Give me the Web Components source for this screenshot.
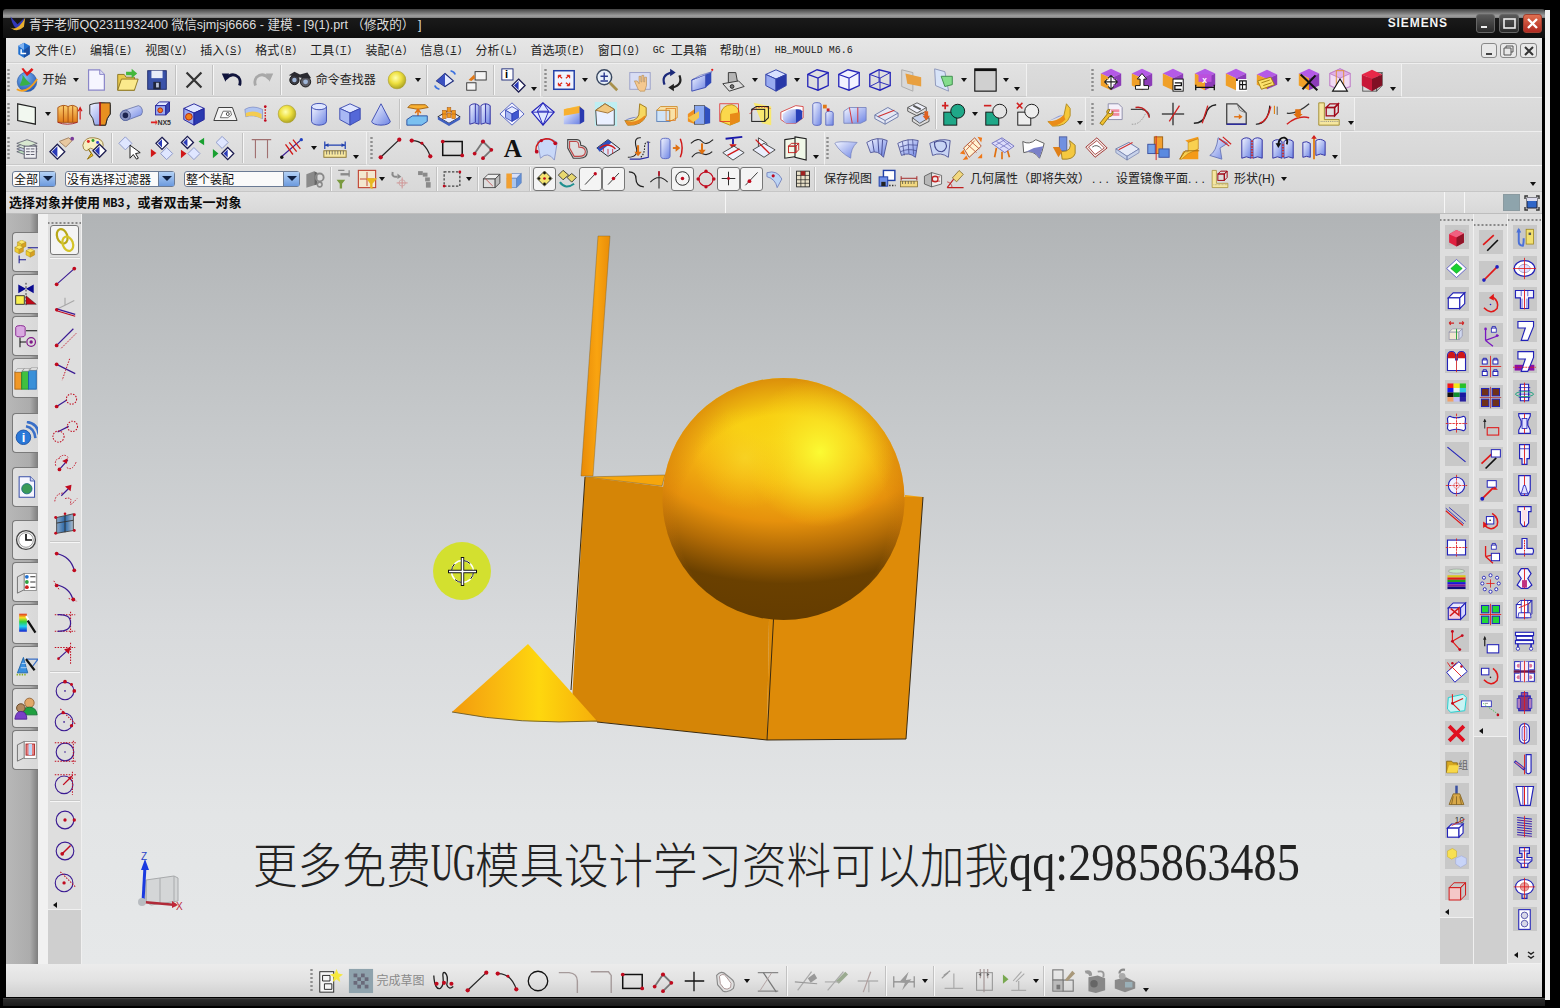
<!DOCTYPE html>
<html lang="zh">
<head>
<meta charset="utf-8">
<title>NX</title>
<style>
  html, body { margin: 0; background: #000; }
  body { width: 1560px; height: 1008px; overflow: hidden; font: 12px "Liberation Sans", "Noto Sans CJK SC", sans-serif; }
</style>
</head>
<body>
<nx-app>
  <nx-title text="青宇老师QQ2311932400 微信sjmjsj6666 - 建模 - [9(1).prt （修改的） ]"></nx-title>
  <nx-client>
    <nx-menubar>
      <nx-i n="ug" w="22" s="20"></nx-i>
      <nx-menu label="文件" k="F"></nx-menu><nx-menu label="编辑" k="E"></nx-menu><nx-menu label="视图" k="V"></nx-menu><nx-menu label="插入" k="S"></nx-menu><nx-menu label="格式" k="R"></nx-menu><nx-menu label="工具" k="T"></nx-menu><nx-menu label="装配" k="A"></nx-menu><nx-menu label="信息" k="I"></nx-menu><nx-menu label="分析" k="L"></nx-menu><nx-menu label="首选项" k="P"></nx-menu><nx-menu label="窗口" k="O"></nx-menu><nx-menu label="GC 工具箱"></nx-menu><nx-menu label="帮助" k="H"></nx-menu><nx-menu mono label="HB_MOULD M6.6"></nx-menu>
    </nx-menubar>

    <nx-row>
      <nx-bar style="width:535px">
        <nx-i n="logo" w="31"></nx-i><nx-label w="28">开始</nx-label><nx-a w="10"></nx-a>
        <nx-i n="newdoc"></nx-i><nx-i n="open" w="30"></nx-i><nx-i n="save"></nx-i><nx-s></nx-s>
        <nx-i n="del"></nx-i><nx-s></nx-s><nx-i n="undo"></nx-i><nx-i n="redo"></nx-i><nx-s></nx-s>
        <nx-i n="bino"></nx-i><nx-label w="66">命令查找器</nx-label><nx-i n="sph"></nx-i><nx-a></nx-a><nx-s></nx-s>
        <nx-i n="rotd"></nx-i><nx-i n="twosq" w="30"></nx-i><nx-s></nx-s><nx-i n="infod"></nx-i><nx-a low></nx-a>
      </nx-bar>
      <nx-bar style="width:484px;margin-left:2px">
        <nx-i n="fit"></nx-i><nx-a></nx-a><nx-i n="zoom" w="33"></nx-i><nx-i n="pan" w="33"></nx-i><nx-i n="rot" w="30"></nx-i><nx-i n="persp"></nx-i><nx-i n="shade"></nx-i><nx-a></nx-a>
        <nx-i n="cubeb"></nx-i><nx-a></nx-a><nx-i n="w1"></nx-i><nx-i n="w2"></nx-i><nx-i n="w3"></nx-i><nx-i n="ploran"></nx-i><nx-i n="plgrn"></nx-i><nx-a></nx-a><nx-i n="graysq"></nx-i><nx-a></nx-a><nx-a low></nx-a>
      </nx-bar>
      <nx-bar style="width:312px;margin-left:63px">
        <nx-i n="pmove"></nx-i><nx-i n="pup"></nx-i><nx-i n="pcopy"></nx-i><nx-i n="pdim"></nx-i><nx-i n="pbox"></nx-i><nx-i n="pnote"></nx-i><nx-a></nx-a><nx-i n="px"></nx-i><nx-i n="ptri"></nx-i><nx-i n="redwire"></nx-i><nx-a low></nx-a>
      </nx-bar>
    </nx-row>

    <nx-row>
      <nx-bar style="width:1080px">
        <nx-i n="sheet" w="31"></nx-i><nx-a></nx-a><nx-i n="extr"></nx-i><nx-i n="rev"></nx-i><nx-i n="tube"></nx-i><nx-i n="nx5"></nx-i><nx-i n="hblk"></nx-i><nx-i n="emb"></nx-i><nx-i n="swp"></nx-i><nx-i n="sph"></nx-i><nx-i n="cyl"></nx-i><nx-i n="blk"></nx-i><nx-i n="cone"></nx-i><nx-s></nx-s>
        <nx-i n="ped" w="31"></nx-i><nx-i n="dots"></nx-i><nx-i n="book"></nx-i><nx-i n="dcube"></nx-i><nx-i n="wball"></nx-i><nx-i n="otop"></nx-i><nx-i n="cpic"></nx-i><nx-i n="ysheet"></nx-i><nx-i n="cube2"></nx-i><nx-i n="ocyl"></nx-i><nx-i n="rdome"></nx-i><nx-i n="ybox"></nx-i><nx-i n="rcut"></nx-i><nx-i n="cyl2"></nx-i><nx-i n="split"></nx-i><nx-i n="slab"></nx-i><nx-i n="slabs"></nx-i><nx-s></nx-s>
        <nx-i n="uadd"></nx-i><nx-a></nx-a><nx-i n="usub"></nx-i><nx-i n="uint"></nx-i><nx-i n="ysweep"></nx-i><nx-a low></nx-a>
      </nx-bar>
      <nx-bar style="width:265px;margin-left:4px">
        <nx-i n="wrench"></nx-i><nx-i n="cv1"></nx-i><nx-i n="cv2"></nx-i><nx-i n="cv3"></nx-i><nx-i n="cv4"></nx-i><nx-i n="cv5"></nx-i><nx-i n="cv6"></nx-i><nx-i n="ruler"></nx-i><nx-a low></nx-a>
      </nx-bar>
    </nx-row>

    <nx-row>
      <nx-bar style="width:361px">
        <nx-i n="layers" w="30"></nx-i><nx-s w="5"></nx-s><nx-i n="dhand"></nx-i><nx-i n="palette"></nx-i><nx-s></nx-s><nx-i n="dcur"></nx-i><nx-i n="d2a"></nx-i><nx-i n="d2b"></nx-i><nx-i n="d2c"></nx-i><nx-s></nx-s><nx-i n="hh"></nx-i><nx-i n="hatch"></nx-i><nx-a></nx-a><nx-i n="meas"></nx-i><nx-a low></nx-a>
      </nx-bar>
      <nx-bar style="width:456px;margin-left:2px">
        <nx-i n="sline" w="31"></nx-i><nx-i n="sarc"></nx-i><nx-i n="srect"></nx-i><nx-i n="sprof"></nx-i><nx-i n="atxt"></nx-i><nx-i n="spat"></nx-i><nx-i n="heart"></nx-i><nx-i n="wing"></nx-i><nx-i n="ucv"></nx-i><nx-i n="cylarr"></nx-i><nx-i n="scv"></nx-i><nx-i n="tplate"></nx-i><nx-i n="xplate"></nx-i><nx-i n="cards"></nx-i><nx-a low></nx-a>
      </nx-bar>
      <nx-bar style="width:516px">
        <nx-i n="s1"></nx-i><nx-i n="s2"></nx-i><nx-i n="s3"></nx-i><nx-i n="s4"></nx-i><nx-i n="s5"></nx-i><nx-i n="s6"></nx-i><nx-i n="s7"></nx-i><nx-i n="s8"></nx-i><nx-i n="s9"></nx-i><nx-i n="s10"></nx-i><nx-i n="s11"></nx-i><nx-i n="s12"></nx-i><nx-i n="s13"></nx-i><nx-i n="s14"></nx-i><nx-i n="s14b"></nx-i><nx-i n="s15"></nx-i><nx-a low></nx-a>
      </nx-bar>
    </nx-row>

    <nx-selbar>
      <nx-combo style="margin-left:6px;width:44px" label="全部"></nx-combo>
      <nx-combo style="margin-left:9px;width:110px" label="没有选择过滤器"></nx-combo>
      <nx-combo style="margin:0 3.5px 0 9px;width:116px" label="整个装配"></nx-combo>
      <nx-i n="gblk" w="23" s="22"></nx-i><nx-s w="9" h="24"></nx-s><nx-i n="gfun" w="20" s="22"></nx-i><nx-i n="rfil" w="22" s="22"></nx-i><nx-a w="8"></nx-a>
      <nx-i n="gcross" w="26" s="22"></nx-i><nx-i n="gdots" w="21" s="22"></nx-i><nx-s w="9" h="24"></nx-s><nx-i n="dashrect" w="20" s="22"></nx-i><nx-a w="14"></nx-a><nx-s w="5" h="24"></nx-s>
      <nx-i n="graybx" w="23" s="22"></nx-i><nx-i n="bluebx" w="23" s="22"></nx-i><nx-s w="7" h="24"></nx-s>
      <nx-i n="snapall" box w="22"></nx-i><nx-i n="snapg" w="23" s="22"></nx-i><nx-i n="snapend" box w="23"></nx-i><nx-i n="snapmid" box w="23"></nx-i><nx-i n="snapc" w="23" s="22"></nx-i><nx-i n="snapt" w="23" s="22"></nx-i><nx-i n="snapcirc" box w="24"></nx-i><nx-i n="snapq" w="22" s="22"></nx-i><nx-i n="snapx" box w="23"></nx-i><nx-i n="snapo" box w="23"></nx-i><nx-i n="snapw" w="22" s="22"></nx-i>
      <nx-s w="11" h="24"></nx-s><nx-i n="grid" w="15" s="20"></nx-i><nx-s w="9" h="24"></nx-s>
      <nx-label w="48" style="margin-left:4.5px">保存视图</nx-label>
      <nx-i n="view2" w="30" s="20"></nx-i><nx-i n="rlr" w="14" s="20"></nx-i><nx-i n="wall" w="34" s="20"></nx-i><nx-i n="tria" w="10" s="20"></nx-i>
      <nx-label w="137" style="margin-left:10px">几何属性（即将失效）<span style="letter-spacing:3.4px;margin-left:2px">...</span></nx-label>
      <nx-label w="87" style="margin-left:9px">设置镜像平面<span style="letter-spacing:3.4px">...</span></nx-label>
      <nx-i n="ruler" w="28" s="20" style="margin-left:3px"></nx-i>
      <nx-label w="42">形状(H)</nx-label><nx-a w="16"></nx-a>
      <nx-a low style="margin-left:auto;margin-right:4px"></nx-a>
    </nx-selbar>

    <nx-cue text="选择对象并使用"></nx-cue>

    <nx-main>
      <nx-res>
        <nx-tab n="tab1"></nx-tab><nx-tab n="tab2"></nx-tab><nx-tab n="tab3"></nx-tab><nx-tab n="tab4"></nx-tab>
        <nx-tab n="tab5" style="margin-top:13px"></nx-tab>
        <nx-tab n="tab6" style="margin-top:12px"></nx-tab>
        <nx-tab n="tab7" style="margin-top:11px"></nx-tab><nx-tab n="tab8"></nx-tab><nx-tab n="tab9"></nx-tab><nx-tab n="tab10"></nx-tab><nx-tab n="tab11"></nx-tab><nx-tab n="tab12"></nx-tab>
      </nx-res>
      <nx-stripe></nx-stripe>
      <nx-vbar style="--top:4px;--h:696px">
        <nx-i v box n="link" style="height:30px"></nx-i><nx-s v></nx-s>
        <nx-i v n="l1"></nx-i><nx-i v n="l2"></nx-i><nx-i v n="l3"></nx-i><nx-i v n="l4"></nx-i><nx-i v n="l5"></nx-i><nx-i v n="l6"></nx-i><nx-i v n="l7"></nx-i><nx-i v n="l8"></nx-i><nx-i v n="l9"></nx-i><nx-s v></nx-s>
        <nx-i v n="a1"></nx-i><nx-i v n="a2"></nx-i><nx-i v n="a3"></nx-i><nx-i v n="a4"></nx-i><nx-s v></nx-s>
        <nx-i v n="c1"></nx-i><nx-i v n="c2"></nx-i><nx-i v n="c3"></nx-i><nx-i v n="c4"></nx-i><nx-s v></nx-s>
        <nx-i v n="c5"></nx-i><nx-i v n="c6"></nx-i><nx-i v n="c7"></nx-i><nx-tri></nx-tri>
      </nx-vbar>
      <nx-viewport>
        <nx-watermark></nx-watermark>
      </nx-viewport>
      <nx-vbar style="--top:0.5px;--h:704px">
        <nx-i v tile n="r1"></nx-i><nx-i v tile n="r2"></nx-i><nx-i v tile n="r3"></nx-i><nx-i v tile n="r4"></nx-i><nx-i v tile n="r5"></nx-i><nx-i v tile n="r6"></nx-i><nx-i v tile n="r7"></nx-i><nx-i v tile n="r8"></nx-i><nx-i v tile n="r9"></nx-i><nx-i v tile n="r10"></nx-i><nx-i v tile n="r11"></nx-i><nx-i v tile n="r12"></nx-i><nx-i v tile n="r13"></nx-i><nx-i v tile n="r14"></nx-i><nx-i v tile n="r15"></nx-i><nx-i v tile n="r16"></nx-i><nx-i v tile n="r17"></nx-i><nx-i v tile n="r18"></nx-i><nx-i v tile n="r19"></nx-i><nx-i v tile n="r20"></nx-i><nx-i v tile n="r21"></nx-i><nx-i v tile n="r22"></nx-i><nx-tri></nx-tri>
      </nx-vbar>
      <nx-vbar style="--top:5.5px;--h:523px">
        <nx-i v tile n="q1"></nx-i><nx-i v tile n="q2"></nx-i><nx-i v tile n="q3"></nx-i><nx-i v tile n="q4"></nx-i><nx-i v tile n="q5"></nx-i><nx-i v tile n="q6"></nx-i><nx-i v tile n="q7"></nx-i><nx-i v tile n="q8"></nx-i><nx-i v tile n="q9"></nx-i><nx-i v tile n="q10"></nx-i><nx-i v tile n="q11"></nx-i><nx-i v tile n="q12"></nx-i><nx-i v tile n="q13"></nx-i><nx-i v tile n="q14"></nx-i><nx-i v tile n="q15"></nx-i><nx-i v tile n="q16"></nx-i><nx-tri></nx-tri>
      </nx-vbar>
      <nx-vbar style="--top:0.5px;--h:750px">
        <nx-i v tile n="m1"></nx-i><nx-i v tile n="m2"></nx-i><nx-i v tile n="m3"></nx-i><nx-i v tile n="m4"></nx-i><nx-i v tile n="m5"></nx-i><nx-i v tile n="m6"></nx-i><nx-i v tile n="m7"></nx-i><nx-i v tile n="m8"></nx-i><nx-i v tile n="m9"></nx-i><nx-i v tile n="m10"></nx-i><nx-i v tile n="m11"></nx-i><nx-i v tile n="m12"></nx-i><nx-i v tile n="m13"></nx-i><nx-i v tile n="m14"></nx-i><nx-i v tile n="m15"></nx-i><nx-i v tile n="m16"></nx-i><nx-i v tile n="m17"></nx-i><nx-i v tile n="m18"></nx-i><nx-i v tile n="m19"></nx-i><nx-i v tile n="m20"></nx-i><nx-i v tile n="m21"></nx-i><nx-i v tile n="m22"></nx-i><nx-i v tile n="m23"></nx-i><nx-tri more></nx-tri>
      </nx-vbar>
    </nx-main>

    <nx-status>
      <nx-bar style="width:849px;height:33px;margin-left:303px" flat>
        <nx-i n="newsk" w="31" ></nx-i><nx-i n="flag" w="31"></nx-i><nx-label w="49" muted>完成草图</nx-label><nx-i n="bprof" w="37"></nx-i><nx-i n="sline" w="29"></nx-i><nx-i n="sarc"></nx-i><nx-i n="bcirc"></nx-i><nx-i n="gfil"></nx-i><nx-i n="gfil2"></nx-i><nx-i n="srect"></nx-i><nx-i n="sprof"></nx-i><nx-i n="bplus"></nx-i><nx-i n="gheart"></nx-i><nx-a></nx-a>
        <nx-i n="gtrim"></nx-i><nx-s w="8"></nx-s><nx-i n="gera" w="29"></nx-i><nx-i n="gera2"></nx-i><nx-i n="gcr"></nx-i><nx-s></nx-s><nx-i n="gdim"></nx-i><nx-a></nx-a><nx-s></nx-s><nx-i n="gperp"></nx-i><nx-i n="gpar"></nx-i><nx-i n="gtan"></nx-i><nx-a></nx-a><nx-s></nx-s><nx-i n="gsq"></nx-i><nx-i n="gman"></nx-i><nx-i n="gman2"></nx-i><nx-a low></nx-a>
      </nx-bar>
    </nx-status>
  </nx-client>
</nx-app>

<script>
// small drawing helpers for the toolbar icons (28 x 28 box)
const P = (d, f = 'none', s = 'none', w = 1, x = '') => `<path d="${d}" fill="${f}" stroke="${s}" stroke-width="${w}" ${x}/>`;
const L = (d, s = '#22229a', w = 1.3, x = '') => P(d, 'none', s, w, x);
const C = (x, y, r, f = 'none', s = 'none', w = 1) => `<circle cx="${x}" cy="${y}" r="${r}" fill="${f}" stroke="${s}" stroke-width="${w}"/>`;
const D = (x, y, r = 1.8, f = '#c00a1e') => C(x, y, r, f);
const R = (x, y, w, h, f = 'none', s = 'none', sw = 1) => `<rect x="${x}" y="${y}" width="${w}" height="${h}" fill="${f}" stroke="${s}" stroke-width="${sw}"/>`;
const T = (x, y, t, size = 8, f = '#000', w = 'bold') => `<text x="${x}" y="${y}" font-size="${size}" font-weight="${w}" fill="${f}" font-family="Liberation Sans, Noto Sans CJK SC, sans-serif">${t}</text>`;
const DASH = 'stroke-dasharray="1.6 1.4"';
const PUR = '#3a1a92', RED = '#c00a1e', BLU = '#2222b8', GRY = '#9a9a9a';
// box: front face at x,y+d size w,h with depth d
const box = (x, y, w, h, d, top, front, side, st = '#22229a', sw = 1) =>
  P(`M${x} ${y + d}L${x + d} ${y}H${x + w + d}L${x + w} ${y + d}Z`, top, st, sw) +
  R(x, y + d, w, h, front, st, sw) +
  P(`M${x + w} ${y + d}L${x + w + d} ${y}V${y + h}L${x + w} ${y + h + d}Z`, side, st, sw);
const hex = (f1 = '#d8e0ff', f2 = '#8094e8', f3 = '#2a3ab0', st = '#22229a') =>
  P('M14 3L25 8L14 13L3 8Z', f1, st, 1) + P('M3 8L14 13V26L3 20Z', f2, st, 1) + P('M25 8L14 13V26L25 20Z', f3, st, 1);
const pc = ov => P('M14 2L25 7L14 12L3 7Z', '#b45ae6') + P('M3 7L14 12V25L3 20Z', '#f0a028') + P('M25 7L14 12V25L25 20Z', '#8c3cb8') + ov;
const diamond = (x, y, r = 7) => P(`M${x} ${y - r}L${x + r} ${y}L${x} ${y + r}L${x - r} ${y}Z`, '#fff', '#1c1c50', 1.4) + P(`M${x} ${y - r + 2}V${y + r - 2}L${x - r + 2} ${y}Z`, '#2a3ab8');
const ldia = (x, y, r = 6) => P(`M${x} ${y - r}L${x + r} ${y}L${x} ${y + r}L${x - r} ${y}Z`, '#dfe6ff', '#8a96c8', 1);
const M = (d, x = '') => P(d, '#f4f4ff', BLU, 1.4) + L('M14 2V26', '#e01818', 1.1) + x;
const lock = (x, y) => R(x, y + 3, 6, 5, '#fff', BLU) + L(`M${x + 1} ${y + 3}V${y + 1}H${x + 5}V${y + 3}`, BLU, 1);
const ycube = (x, y, s = 6) => P(`M${x} ${y - s / 2}L${x + s} ${y - s}L${x + 2 * s} ${y - s / 2}L${x + s} ${y}Z`, '#fbe86a', '#a88a18', .5) + P(`M${x} ${y - s / 2}L${x + s} ${y}V${y + s}L${x} ${y + s / 2}Z`, '#f0cc30', '#a88a18', .5) + P(`M${x + 2 * s} ${y - s / 2}L${x + s} ${y}V${y + s}L${x + 2 * s} ${y + s / 2}Z`, '#d8a020', '#a88a18', .5);
const G = '#8a8a8a';

const ICONS = {
  ug: P('M6 8L14 4L22 8V20L14 25L6 20Z', '#1f6fd0') + P('M14 4V14L6 8Z', '#7fb2f0') + P('M14 14L22 8V20L14 25Z', '#1a4ea0') + L('M10 13V19H17', '#fff', 2),
  logo: C(14, 16, 10.5, 'url(#glb)', '#1a4ea0', .6) + P('M6 20Q10 12 9 8Q13 14 18 18Q12 21 6 20Z', '#38b048') + P('M8 2L14 10L21 3L19 1L14 6L10 1Z', '#e01818') + L('M3 24Q14 30 25 13', '#f2a020', 2),
  newdoc: P('M6 3H18L23 8V25H6Z', '#f6f6ff', '#8a86c8', 1.3) + P('M18 3V8H23', '#dcdcf4', '#8a86c8', 1),
  open: P('M4 8H11L13 11H22V25H4Z', '#e8c84c', '#8a7420', 1) + P('M4 25L8 13H26L22 25Z', '#fbe98c', '#8a7420', 1) + P('M13 5H19V2L25 7L19 12V9H13Z', '#44b83c'),
  save: R(4, 4, 20, 20, '#3a52a8', '#1e2a68') + R(8, 4, 12, 8, '#e8ecf8') + R(10, 16, 8, 8, '#20263c') + R(13, 17, 3, 5, '#b8c0d8'),
  del: L('M6 6L22 22M22 6L6 22', '#333', 2.4),
  undo: L('M7 13Q14 5 21 11Q24 15 22 20', '#10143c', 3) + P('M3 7L11 7L7 16Z', '#10143c'),
  redo: L('M21 13Q14 5 7 11Q4 15 6 20', '#a8a8a8', 3) + P('M25 7L17 7L21 16Z', '#a8a8a8'),
  bino: C(8, 14, 5, '#3c3c44', '#111') + C(20, 16, 5.5, '#5a5a62', '#111') + C(8, 14, 2.4, '#9fb6d8') + C(20, 16, 2.6, '#9fb6d8') + P('M2 9L8 5L14 8L22 6L26 12L18 12L12 11Z', '#2a2a30'),
  sph: C(14, 14, 9.5, 'url(#y)', '#a89820', .6),
  rotd: P('M14 7L23 15L14 21L5 15Z', '#e6ecff', '#1c2a7a', 1.2) + P('M14 7V21L5 15Z', '#3a50c0') + L('M20 4Q24 5 25 8M8 24Q4 23 3 20', '#3a70e0', 1.8),
  twosq: R(13, 5, 12, 9, '#f4f4f4', '#333') + R(4, 17, 10, 8, '#f4f4f4', '#333') + P('M6 14L12 8L13 12L9 15Z', '#e07818'),
  infod: R(2, 2, 12, 12, '#fff', '#1c2a7a') + T(5.5, 12, 'i', 12, '#000') + diamond(20, 20, 7),
  fit: R(3, 4, 22, 20, '#f0f4ff', '#2440a8', 1.6) + L('M8 9L12 12M8 9H11M8 9V12M20 9L16 12M20 9H17M20 9V12M8 20L12 17M8 20H11M8 20V17M20 20L16 17M20 20H17M20 20V17', '#e02818', 1.3),
  zoom: C(11, 11, 8, '#e8f0f8', '#3a4860', 1.6) + L('M7 10H15M11 6V14M7 15H15', '#2a3a90', 1.5) + L('M17 17L25 25', '#a8914c', 3),
  pan: R(3, 6, 22, 18, '#d8ddf4', '#9aa0c8') + P('M12 24L8 15L11 15L13 18V10H15V16H16V9H18V16H19V11H21V20L19 26H14Z', '#f4c890', '#b08040', .6),
  rot: L('M6 19Q2 9 13 6', '#1c2a7a', 2.4) + P('M12 2L18 6L12 10Z', '#1c2a7a') + L('M22 9Q26 19 15 22', '#222', 2.4) + P('M16 26L10 22L16 18Z', '#222'),
  persp: P('M3 14L18 8V22L3 26Z', 'url(#b)', '#3a4ab0') + P('M3 14L12 9L25 5L18 8Z', '#fff', '#3a4ab0', .6) + P('M18 8L24 6V17L18 22Z', '#3048b8') + D(25, 3, 1.2, '#e01818'),
  shade: P('M9 17V6H17L19 17Z', '#b4b4b4', '#333') + P('M3 18L20 15L26 21L10 26Z', '#dcdcdc', '#333') + C(13, 21, 2, '#777', '#222'),
  cubeb: hex('#d8e0ff', '#98aaf0', '#2838a8', '#3040a8'),
  w1: P('M3 8L13 3L25 6V20L14 25L3 21Z', 'none', BLU, 1.4) + L('M3 8L14 12L25 6M14 12V25', BLU, 1.4),
  w2: P('M3 8L13 3L25 6V20L14 25L3 21Z', '#f2f2ff', BLU, 1.4) + L('M3 8L14 12L25 6M14 12V25', BLU, 1.2),
  w3: P('M3 8L13 3L25 6V20L14 25L3 21Z', 'none', BLU, 1.4) + L('M3 8L14 12L25 6M14 12V25M13 3V16L3 21M13 16L25 20', BLU, 1),
  ploran: P('M4 3L16 6V26L4 21Z', '#d8d8d8', '#aaa') + P('M8 7L25 11V21L10 18Z', '#e8a040'),
  plgrn: P('M5 2L16 5L20 26L6 20Z', '#d8e4f8', '#8a94b8') + P('M12 10H24V19L16 21Z', '#84dc8c', '#3a8a4a'),
  graysq: R(3, 2, 23, 24, '#d0d0d0', '#111', 1.2) + R(3, 2, 23, 2.4, '#111'),
  pmove: pc(L('M14 10V23M8 16H20', '#fff', 5) + L('M14 9V24M7 16H21M14 9L11 12M14 9L17 12M14 24L11 21M14 24L17 21M7 16L10 13M7 16L10 19M21 16L18 13M21 16L18 19', '#222', 1.2)),
  pup: pc(P('M14 7L19 13H16V20H21V24H7V20H12V13H9Z', '#fff', '#111', 1)),
  pcopy: pc(R(14, 13, 11, 13, '#fff', '#111') + L('M16 17H23V20H16V24H23', '#111', 1.4)),
  pdim: pc(R(7, 8, 14, 8, '#bb50dd') + T(11, 17, 'x', 9, '#fff') + L('M4 22H24M4 19V25M24 19V25', '#111', 1.4)),
  pbox: pc(R(14, 13, 12, 13, '#fff') + L('M18 15H25V24H18ZM21 15V24M18 19H25', '#111', 1.2) + R(14, 13, 2, 2, '#111')),
  pnote: P('M14 3L25 8L14 13L3 8Z', '#b45ae6') + P('M3 8L14 13V24L3 19Z', '#f0a028') + P('M25 8L14 13V24L25 19Z', '#8c3cb8') + P('M4 15L18 11L22 19L8 24Z', '#fbe16c', '#a07c10') + L('M8 17L17 14M10 20L19 17', '#a07c10', 1),
  px: pc(L('M5 8L23 25M21 9L7 24', '#111', 2.2)),
  ptri: P('M14 2L25 7V21L14 25L3 20V7Z', '#f0dcf4', '#c080c8', 1.2) + P('M14 2L25 7L14 12L3 7Z', '#e0b0e8', '#c080c8') + R(10, 4, 8, 16, 'none', '#e09030') + P('M14 13L22 26H6Z', '#fff', '#111', 1.2),
  redwire: box(4, 6, 15, 14, 6, 'none', 'none', 'none', '#555', 1) + hex('#e82848', '#c81838', '#801024', 'none'),

  sheet: P('M4 3L23 7V25L4 21Z', '#f2f8f0', '#222', 1.3),
  extr: P('M2 7Q8 3 13 6Q18 3 23 7V23H2Z', 'url(#o)', '#a85010') + L('M8 5V23M13 6V23M18 5V23', '#a85010', 1) + L('M2 23Q12 27 23 23', '#a82020', 1) + L('M26 20V8M24 11L26 7L28 11', '#d01818', 1.2),
  rev: P('M3 4Q14 0 25 4V14Q21 18 20 26H8Q7 18 3 14Z', 'url(#b)', '#222', 1) + P('M14 2H25V14Q21 18 20 26H14Z', '#e89020', '#222', 1) + L('M14 1V27', RED, 1.4),
  tube: P('M7 10L22 5A5 6 0 0 1 25 15L9 21A5.5 5.5 0 0 1 7 10Z', 'url(#b)', '#5a68a0', .8) + C(8, 15.5, 5.5, '#8a94c0', '#5a68a0') + C(8, 15.5, 3, '#1c2450'),
  nx5: box(6, 1, 11, 10, 4, '#dfe6ff', '#9aaaf0', '#3a4ab0') + C(11, 10, 2.6, '#f08018', '#b02010') + T(8, 26, 'NX5', 7.5, '#333') + P('M1 22H6V20L8 23L6 26V24H1Z', '#e02020'),
  hblk: hex('#dfe6ff', '#9aaaf0', '#2a3ab0') + C(8.5, 17, 3.6, '#f08018', '#b02010'),
  emb: P('M7 7H22L27 21H2Z', '#f4f4f4', '#333', 1) + P('M9 18L12 11H20L21 15L17 18Z', '#fff', '#444', .8) + C(17, 14, 1.6, 'none', '#444'),
  swp: P('M2 9Q10 4 21 9V19Q11 14 3 17Z', '#b0c4f0', '#6a78b8', .6) + P('M3 13Q11 9 20 14V19Q11 14 3 17Z', '#f4cc50') + L('M24 6V21', '#d01818', 1.6, DASH) + D(24, 6, 1.4) + D(24, 21, 1.4),
  cyl: P('M6 6V22A8 4 0 0 0 22 22V6Z', 'url(#b)', '#3a4ab0') + `<ellipse cx="14" cy="6" rx="8" ry="3.4" fill="#dfe6ff" stroke="#3a4ab0"/>`,
  blk: hex('#dfe6ff', '#a8b8f4', '#5468d8', '#3a4ab0'),
  cone: P('M14 3L24 22A10 4 0 0 1 4 22Z', 'url(#b)', '#3a4ab0'),
  ped: P('M6 4H22L25 7L14 9L3 7Z', '#f8b030', '#a06010') + L('M14 9V17M11 13L14 9L17 13', '#e07010', 1.6) + P('M2 20L8 16H24V22L18 26H2Z', '#7ac0f0', '#2a50a0'),
  dots: P('M2 17L14 10L26 17L14 24Z', '#e8ecff', '#222') + P('M2 17V20L14 27L26 20V17L14 24Z', '#4060c0') + [[9, 14], [14, 11], [19, 14], [14, 17], [9, 18], [19, 18]].map(p => R(p[0] - 2, p[1] - 4, 4, 5, '#f09820', '#a05010', .5)).join(''),
  book: P('M3 5Q8 1 13 5V25Q8 22 3 25Z', 'url(#b)', '#2a2aa0') + P('M15 5Q20 1 25 5V25Q20 22 15 25Z', 'url(#b)', '#2a2aa0') + L('M9 3V23M20 3V23', '#2a2aa0', 1),
  dcube: P('M14 2L27 14L14 26L1 14Z', '#f2f2ff', '#5060c0', 1) + P('M14 6L21 10L14 14L7 10Z', '#e8eeff', '#2a3ab0', .8) + P('M7 10L14 14V22L7 18Z', '#a8b8f4', '#2a3ab0', .8) + P('M21 10L14 14V22L21 18Z', '#4058d0', '#2a3ab0', .8),
  wball: P('M14 2L26 12L14 26L2 12Z', '#dfe6ff', BLU, 1.3) + L('M14 2L8 11H20ZM2 12H26M8 11L14 26L20 11', BLU, 1),
  otop: P('M3 9L20 5L24 10L8 14Z', '#f4c040') + R(3, 9, 17, 16, 'url(#b)') + P('M3 9L20 6V13L3 16Z', '#f8b030') + P('M20 6L25 10V22L20 25Z', '#2a3ab0'),
  cpic: R(3, 1, 24, 26, '#bfeef2') + P('M4 10L14 3L24 9V26H5Z', '#eaf0ff', '#444') + P('M4 10L14 3L24 9L17 13Z', '#f0c880', '#a07030'),
  ysheet: P('M2 21Q14 23 17 15L18 3L25 7V16Q20 27 5 26Z', '#f6d860', '#a07818') + P('M2 21L5 26Q20 27 25 16L23 16Q14 25 2 21Z', '#e88a20') + P('M2 21Q8 17 16 17L2 21Z', '#7080c8'),
  cube2: R(3, 10, 14, 12, '#d0e4f8', '#5a80b8') + P('M3 10L7 6H25V18L17 22V10Z', '#f8e2a8', '#d09030') + R(13, 8, 10, 13, 'none', '#e07818', .8),
  ocyl: P('M2 14L10 8V25L2 22Z', '#f09020') + R(9, 5, 11, 20, '#8aa8f0', '#222', .6) + P('M20 5L26 9V24L20 25Z', '#3050c0') + P('M2 18L14 11V18L8 23Z', '#f4c850'),
  rdome: P('M4 14Q6 4 16 4Q24 6 24 14V22L14 26L4 22Z', '#fbd84c', '#c09010') + R(3, 3, 20, 19, 'none', '#e02020', .8) + P('M14 14L24 12V22L14 26Z', '#e88a18'),
  ybox: P('M6 2L25 6V26L15 24Z', '#f8e870') + R(4, 9, 14, 13, 'none', '#222', 1.1) + P('M4 9L9 6H22V18L18 22', 'none', '#222', 1.1) + L('M2 14Q8 3 24 8', '#d02020', 1, DASH),
  rcut: P('M2 12L18 5L26 6V18L18 24H8L2 20Z', '#fff', '#d02020', .8) + P('M4 14Q10 8 18 9V24H8Q3 22 4 14Z', 'url(#b)') + P('M18 9Q24 8 25 11V19L18 24Z', '#2840b8'),
  cyl2: P('M3 4A4 2 0 0 1 12 4V24A4 2 0 0 1 3 24Z', 'url(#b)', '#5a68c0') + P('M17 13A4 2 0 0 1 25 13V26H17Z', 'url(#b)', '#5a68c0') + R(14, 4, 4, 4, '#e07818') + R(18, 8, 3, 3, '#d02020'),
  split: P('M2 11L8 7H26V21L20 24H2Z', 'url(#b)', '#6a78b8', .8) + L('M8 7L11 24M17 7V23', '#d83030', 1),
  slab: P('M2 15L16 7L27 13V17L13 25L2 19Z', '#e4e8f4', '#6a78a8') + L('M5 17L23 10', '#d03030', 1.2) + L('M2 15L13 21L27 13M13 21V25', '#6a78a8', 1),
  slabs: P('M4 7L14 2L24 7L14 13Z', '#eef0fa', '#555') + P('M9 18L19 13L27 18L17 24Z', '#c8d4ee', '#555') + L('M4 7V11L14 16L24 11V7', '#555', 1) + L('M9 18V22L17 27L27 22V18', '#555', 1) + L('M10 5L18 9', '#555', 2) + P('M22 11H26V16H28L24 21L20 16H22Z', '#e06020'),
  uadd: R(3, 12, 14, 14, '#1fa888', '#111') + C(18, 11, 7.5, '#1fa888', '#111') + L('M1 5H8M4.5 1V9', '#d02020', 1.8),
  usub: R(3, 12, 14, 14, '#1fa888', '#111') + C(18, 11, 7.5, '#e4e4e4', '#111') + L('M1 5H9', '#d02020', 1.8),
  uint: R(3, 12, 14, 14, '#eee', '#111') + C(18, 11, 7.5, '#eee', '#111') + L('M2 2L8 8M8 2L2 8', '#d02020', 1.6),
  ysweep: P('M2 22Q15 25 19 17L22 3L26 8V16Q22 28 7 27Z', '#f5c83a', '#b08a20') + P('M2 22Q12 22 19 15L21 20Q14 27 7 27Z', '#ea8c18') + P('M2 22L14 16L19 15Z', '#8a98d8'),
  wrench: P('M11 3H22L26 7V20H11Z', '#f4f0fa', '#8a8aa8') + R(14, 9, 9, 3, '#f08ca0') + R(14, 13, 9, 3, '#f08ca0') + P('M2 24L10 14Q8 9 13 9L11 13L14 14L16 11Q17 16 12 17L5 26Z', '#f0c030', '#907010'),
  cv1: L('M2 9H14Q22 11 22 17', '#444', 1.2) + L('M7 7Q18 5 22 18', '#c02020', 1.4) + L('M3 25Q12 26 18 13', '#888', .9, DASH),
  cv2: L('M2 14H26', '#444', 1.6) + L('M14 2V26', '#444', 1.6) + L('M21 5L10 22', '#d02020', 1.4),
  cv3: L('M2 24Q12 24 15 14Q17 5 26 4', '#222', 1.6) + L('M17 5L11 24', '#d02020', 1.4),
  cv4: P('M4 3H15L25 13V25H4Z', 'none', '#444', 1.4) + L('M15 3L18 10L25 13', '#777', .9) + L('M12 17H19', '#e07010', 1.5) + P('M17 14L21 17L17 20Z', '#e07010') + L('M4 25H25', '#2a2aa0', 1.6),
  cv5: L('M2 25Q15 25 17 5', '#111', 1.2) + L('M6 24Q15 21 18 6', '#d02020', 1.6) + L('M22 5V14', '#e08010', 1.2) + L('M25 6V15', '#555', 1),
  cv6: L('M2 13Q12 15 26 3', '#333', 1.4) + L('M2 25Q14 15 26 18', '#d02020', 1.6) + P('M11 9H17V14H19L14 19L9 14H11Z', '#e07010'),
  ruler: P('M3 2H9V20H25V26H3Z', '#f6e7a0', '#a08a30') + L('M5 22H24', '#888', 1, 'stroke-dasharray="1 1"') + box(11, 3, 9, 9, 4, 'none', 'none', 'none', '#a00818', 1.4),

  layers: [14, 11, 8, 5].map((y, i) => P(`M3 ${y + 4}L14 ${y}L25 ${y + 4}L14 ${y + 8}Z`, ['#bfe0c0', '#c8d0e8', '#d8e8d8', '#d8e8d0'][i], '#556', .8)).join('') + R(11, 12, 13, 13, '#f0f0f4', '#556') + L('M13 15H17M13 18H17M13 21H17M18 15H22M18 18H22M18 21H22', '#556', 1),
  dhand: diamond(9, 18, 8) + P('M11 7L21 3L25 6L18 13Z', '#e8c8a0', '#a08060') + D(25, 4, 2, '#7a3a9a'),
  palette: P('M3 11Q5 2 15 3Q25 4 25 11Q24 17 18 17L11 14Q7 19 4 15Z', '#f6efc0', '#9a8040') + D(9, 7, 1.6, '#e02020') + D(14, 6, 1.6, '#2a9a2a') + D(19, 8, 1.6, '#3040d0') + diamond(21, 17, 7) + P('M9 15L14 22L8 26L12 20Z', '#f0c020', '#907010'),
  dcur: ldia(9, 9, 7) + P('M14 11V25L17.5 21L21 26L23 25L20 20L25 19Z', '#fff', '#111', 1),
  d2a: diamond(14, 9, 6.5) + ldia(19, 20, 6.5) + P('M2 15L8 19.5L2 24Z', '#d01818'),
  d2b: diamond(8, 8, 6.5) + ldia(15, 20, 6.5) + P('M26 3V11L20 7Z', '#18a030') + P('M1 16L7 20L1 25Z', '#d01818'),
  d2c: ldia(12, 8, 6.5) + diamond(18, 20, 6.5) + P('M2 15L8 20L2 25Z', '#18a030'),
  hh: L('M4 5H25M8 5V25M21 5V25', '#a07070', 1.2),
  hatch: L('M2 24L24 5', PUR, 1.2) + L('M7 10L15 21M11 8L19 18M15 5L23 15', '#d01818', 1.4) + D(3, 24, 1.8, '#111') + D(24, 5, 1.8, '#2040c0'),
  meas: L('M3 7V15M25 7V15M3 11H25', '#2040b0', 1.3) + P('M3 11L7 9V13ZM25 11L21 9V13Z', '#2040b0') + R(2, 17, 24, 7, '#f6e7a0', '#8a7430') + L('M5 17V21M8 17V21M11 17V21M14 17V21M17 17V21M20 17V21M23 17V21', '#555', .8),
  sline: L('M4 24L24 5', '#222', 1.3) + D(4, 24, 2.3) + D(24, 5, 2.3),
  sarc: L('M3 6Q18 5 24 23', '#222', 1.3) + D(4, 6, 2.3) + D(15, 9, 1.6) + D(24, 23, 2.3),
  srect: R(4, 7, 21, 15, 'none', '#111', 1.6) + D(4, 7, 2) + D(25, 22, 2),
  sprof: L('M5 20L14 7L23 16L14 25', '#777', 2) + D(5, 20, 2) + D(14, 7, 2.2) + D(14, 25, 2) + D(23, 16, 2),
  atxt: `<text x="2" y="24" font-size="27" font-weight="bold" fill="#111" font-family="Liberation Serif, serif">A</text>`,
  spat: P('M5 7Q16 0 26 8L23 27Q16 17 8 25Z', '#c8d8f8', '#8a96c8') + L('M3 17Q3 6 14 4Q21 4 24 9', '#d01818', 1.6) + D(4, 18, 2) + D(9, 6, 1.8) + D(24, 9, 2),
  heart: P('M4 5H14Q18 5 18 11Q25 12 25 18Q25 25 17 25L10 25L4 14Z', 'none', '#444', 1.2) + P('M6 7H13Q16 7 16 13Q23 13 23 18Q23 23 16 23H11L6 14Z', 'none', '#c04848', 1.2),
  wing: P('M2 14L14 5L27 15L14 23Z', '#dbe6fc', '#222', 1) + P('M2 14L14 5L18 8L5 18Z', '#3050c0') + L('M5 14Q14 7 22 15', '#d01818', 1.4) + L('M9 18V14M14 21V15M19 20V15', '#d01818', .8),
  ucv: L('M2 24Q14 24 11 13T16 3', '#222', 1.2) + L('M16 24Q20 20 20 13T26 8', '#222', 1.2, DASH) + L('M13 11V19', '#e07010', 2.2) + P('M9 18H17L13 23Z', '#e07010') + L('M4 26H15L24 24V7', '#2a2aa0', 1.2),
  cylarr: P('M3 6A5 2.5 0 0 1 13 6V23A5 2.5 0 0 1 3 23Z', 'url(#b)', '#5a68c0') + L('M16 14H21', '#e07010', 2) + P('M19 10L24 14L19 18Z', '#e07010') + L('M24 4Q28 14 24 24', '#d01818', 1.6),
  scv: L('M2 9Q10 2 14 7T26 5', '#222', 1.2) + L('M3 24Q8 17 14 20T25 18', '#222', 1.2) + L('M14 9V17', '#e07010', 2.2) + P('M10 16H18L14 21Z', '#e07010'),
  tplate: L('M6 4L24 2M14 3V10', '#1818a8', 2) + P('M10 10H18L14 15Z', '#d01818') + P('M3 19L15 12L26 19L14 27Z', '#eef3fd', '#444') + L('M8 22L21 15', '#d01818', 1.4),
  xplate: P('M8 3L17 9V21L8 15Z', '#f0f4ff', '#444') + P('M2 16L14 9L26 16L14 24Z', '#eaeefc', '#444') + L('M5 5L20 20', '#d01818', 1.4),
  cards: P('M3 5L17 3V23L3 25Z', '#f2f8e8', '#222', 1.2) + P('M14 2L26 4V27L14 24Z', '#f0f8e8', '#222', 1.2) + box(7, 9, 8, 7, 3, 'none', 'none', 'none', '#c02020', 1),
  s1: P('M2 9Q3 6 26 8Q19 14 19 25Q8 19 2 9Z', 'url(#b)', '#6a78b8', .7),
  s2: P('M3 8Q14 1 25 6L21 24Q15 16 7 19Z', 'url(#b)', '#444a90', .9) + L('M9 6L11 18M15 4L16 19M20 5L19 22', '#444a90', 1),
  s3: P('M3 9Q14 3 25 6L22 24Q15 18 7 22Z', 'url(#b)', '#444a90', .9) + L('M8 7L10 22M14 5L15 20M19 5L20 21M5 13Q14 9 24 11M6 18Q14 14 23 17', '#444a90', .8),
  s4: P('M3 9Q14 3 25 6L23 24Q15 18 6 22Z', '#c8d4f4', '#444a90', .9) + L('M8 8Q14 5 20 8Q23 15 16 18Q8 18 8 8Z', '#444a90', 1.2),
  s5: P('M6 14L18 3L25 12L12 24Z', '#fff4d4', '#b05030', 1) + L('M10 10L20 19M14 7L23 15M9 16L18 6', '#c05030', .9) + P('M2 20L6 16L8 21ZM21 2L26 3L25 8ZM5 27L9 22L11 26ZM21 25L26 20L26 25Z', '#f07818'),
  s6: P('M3 9L14 3L27 12L17 19Z', '#dcdcfa', '#7070c0') + L('M8 7L21 15M13 4L24 13M7 11L17 5M12 14L22 8', '#7070c0', .8) + L('M8 14L6 24M14 18L14 26M20 17L22 24', '#e07010', 1.8),
  s7: P('M3 7Q10 11 17 5L26 9Q24 18 21 25Q14 15 4 19Z', '#fff', '#555') + P('M15 14L25 12L21 25Q14 15 4 19Z', '#7a80c8'),
  s8: R(9, 2, 8, 15, '#7090e0', '#5060a0') + P('M11 18Q24 18 20 6L26 11V20Q24 27 12 26Z', '#f4c840', '#a08020') + P('M2 13H9L12 18L8 24Z', '#e08018'),
  s9: P('M3 13L15 3L26 14L13 24Z', '#f0eee8', '#a03030', 1) + P('M6 13L15 6L23 14L13 21Z', '#fff', '#a03030', .9) + L('M10 13Q15 9 20 15', '#555', 1),
  s10: P('M2 15L16 8L27 15L14 23Z', '#e6eaf6', '#6a78a8') + P('M2 15V19L14 27V23ZM14 23V27L27 19V15Z', '#c8d2ea', '#6a78a8', .7) + L('M5 16L20 8', '#d03030', 1.2),
  s11: R(10, 2, 9, 18, '#f2a030', '#a06010') + R(3, 10, 8, 10, '#7aa4e8', '#3a50a0') + R(15, 15, 11, 9, '#5a8ae0', '#3a50a0') + L('M12 1V27', '#d02020', 1),
  s12: P('M10 6L24 2V14L24 26H4L8 18H13V8Z', '#f49a18') + P('M13 8L24 4V15L13 20L6 26L4 26L8 18H13Z', '#f9d050', '#a06810', .5) + L('M4 26L10 17H25', '#a06810', 1),
  s13: P('M12 3L22 9L14 14L16 26L3 22Q10 18 12 3Z', 'url(#b)', '#6a78b8') + L('M13 4L24 12M17 2L26 10', '#d02020', 1.2),
  s14: P('M3 5Q8 1 13 5V25Q8 22 3 25Z', 'url(#b)', '#2a2aa0') + P('M15 5Q20 1 25 5V25Q20 22 15 25Z', 'url(#b)', '#2a2aa0') + L('M14 6V25', '#d02020', 1.8, DASH),
  s14b: P('M3 7Q8 3 13 7V25Q8 22 3 25Z', 'url(#b)', '#2a2aa0') + P('M15 7Q20 3 25 7V25Q20 22 15 25Z', 'url(#b)', '#2a2aa0') + L('M14 10V25', '#d02020', 1.8, DASH) + L('M9 10Q10 2 16 3Q20 5 18 10', '#111', 2) + P('M6 9L12 9L9 14Z', '#111'),
  s15: P('M2 8Q6 6 10 9V24Q6 22 2 24Z', 'url(#b)', '#2a2aa0') + P('M16 6Q21 3 26 7V22Q21 19 16 22Z', 'url(#b)', '#2a2aa0') + L('M14 1V26', '#e08018', 2) + P('M11 4L14 0L17 4Z', '#d02020'),

  // selection bar
  gblk: P('M3 8L13 4V22L3 25Z', '#8a8a8a') + P('M13 4L17 6V21L13 22Z', '#666') + C(20, 12, 5, 'none', G, 2.4) + C(20, 21, 3, 'none', G, 2),
  gfun: L('M7 8H18', G, 3) + P('M12 3H4M18 3V11', 'none', G, 1.6) + P('M2 15H13L9 20V26H6V20Z', '#7a9a40'),
  rfil: R(3, 3, 22, 22, '#f4e8d0', '#c04030', 1.4) + L('M14 5V23M5 14H23', '#c04030', 1.2) + P('M13 13H27L21 20V27L18 25V20Z', '#e8b820'),
  gcross: L('M6 5Q4 12 12 11', G, 2.6) + P('M12 7L17 11L12 14Z', G) + C(18, 19, 4, 'none', '#c8a0a0', 1) + L('M18 12V26M11 19H25', '#d09090', 1.2),
  gdots: R(9, 4, 6, 5, G) + R(15, 6, 6, 5, G) + R(18, 12, 6, 5, G) + R(19, 18, 6, 7, G),
  dashrect: R(4, 5, 20, 18, 'none', '#444', 1.6, '') .replace('/>', ' stroke-dasharray="3 2"/>') + D(4, 23, 1.8) + D(24, 5, 1.8),
  graybx: box(3, 8, 15, 11, 6, '#eee', '#ddd', '#bbb', '#444', 1.1) + L('M6 14L15 23', '#c04040', 1),
  bluebx: box(4, 7, 12, 12, 6, '#d8e0f8', '#a8c4ee', '#6090d8', '#6080b8', .8) + P('M3 7H10V26H3Z', '#f2a030'),
  snapall: P('M14 3L25 14L14 25L3 14Z', '#f4e470', '#222', 1.2) + [[14, 6], [22, 14], [14, 22], [6, 14]].map(p => D(p[0], p[1], 2, '#111')).join('') + D(14, 14, 2),
  snapg: P('M9 3L16 9L9 15L3 9Z', '#e8d870', '#222') + P('M20 7L26 12L20 18L14 12Z', '#e8d870', '#222') + L('M5 18Q12 28 23 20', '#209090', 2.6),
  snapend: L('M6 23L22 6', '#222', 1.3) + D(21, 7, 2.4),
  snapmid: L('M6 23L22 6', '#222', 1.3) + D(14, 14, 2.6),
  snapc: L('M5 5Q14 5 14 14T24 24', '#222', 1.6) + D(14, 14, .1),
  snapt: L('M3 18Q14 6 25 18M14 4V26', '#222', 1.3) + L('M14 10V4', '#c00a1e', 2),
  snapcirc: C(14, 14, 10, 'none', '#111', 1.3) + D(14, 14, 2.6),
  snapq: C(14, 14, 9, 'none', RED, 1.4) + D(14, 4, 2.2) + D(14, 24, 2.2) + D(4, 14, 2.2) + D(24, 14, 2.2),
  snapx: L('M4 14H24M14 4V24', '#111', 1.3) + D(14, 14, 2.2),
  snapo: L('M5 24L23 5', '#222', 1.3) + D(11, 18, 2.8),
  snapw: P('M5 6Q18 2 24 14L18 25Q16 14 5 11Z', '#bcd4f4', '#6a78b8') + D(13, 10, 2),
  grid: R(5, 3, 18, 22, '#e8e0c8', '#222', 1.2) + L('M11 3V25M17 3V25M5 9H23M5 15H23M5 20H23', '#222', 1) + R(11, 3, 6, 6, '#a02020'),
  view2: R(9, 2, 16, 14, '#fff', '#2040a8', 2) + R(3, 11, 12, 13, '#7090e8', '#2040a8', 1.4) + R(6, 18, 6, 6, '#222') + L('M17 23H26', '#333', 2, 'stroke-dasharray="2 2"'),
  rlr: L('M3 10V16M25 10V16M3 13H25', '#a02020', 1.3) + R(2, 17, 24, 8, '#f2d880', '#7a6428') + L('M5 17V21M9 17V21M13 17V21M17 17V21M21 17V21', '#444', 1),
  wall: P('M2 10L12 5V25L2 21Z', '#b8b8b8', '#444') + P('M12 5L26 9V21L12 25Z', '#eee', '#444') + C(17, 14, 4, 'none', '#c02020', 1.8) + L('M12 11H24M12 17H24', '#c02020', 1),
  tria: L('M3 26H26M3 26L20 4', '#c02020', 1.6) + L('M3 18Q9 19 10 26', '#c02020', 1) + R(14, 3, 8, 14, '#f2d880', '#7a6428').replace('/>', ' transform="rotate(42 18 10)"/>'),

  // sketch bar, left side
  link: `<ellipse cx="11" cy="10" rx="5.5" ry="8" fill="none" stroke="#b8a818" stroke-width="2.4" transform="rotate(-20 11 10)"/><ellipse cx="17" cy="18" rx="5.5" ry="8" fill="none" stroke="#d4c428" stroke-width="2.4" transform="rotate(-20 17 18)"/>`,
  l1: L('M5 23L24 6', PUR, 1.2) + D(5, 23, 2) + D(24, 6, 2),
  l2: L('M14 12V4M14 12L24 7M14 12L4 17', '#a8a8a8', 1.2) + L('M5 16L25 22', PUR, 1.3) + L('M5 18L25 24', RED, 1.3) + D(5, 17, 1.8),
  l3: L('M5 22L23 4', PUR, 1.3) + L('M10 25L26 9', RED, 1, DASH) + D(5, 22, 2),
  l4: L('M5 9L25 19', PUR, 1.3) + L('M19 3L11 26', RED, 1, DASH) + D(5, 9, 2),
  l5: L('M5 21L16 14', PUR, 1.3) + C(21, 13, 5.5, 'none', RED, 1.1).replace('/>', ` ${DASH}/>`) + D(5, 21, 2),
  l6: L('M6 15L18 9', PUR, 1.3) + C(22, 9, 5.5, 'none', RED, 1.1).replace('/>', ` ${DASH}/>`) + C(7, 20, 6, 'none', RED, 1.1).replace('/>', ` ${DASH}/>`),
  l7: L('M8 9Q14 4 18 10', RED, 1, DASH) + L('M4 18Q2 10 10 10', RED, 1, DASH) + L('M8 22L17 12', PUR, 1.3) + P('M11 13L17 10L16 16Z', RED) + D(8, 22, 2) + L('M16 20Q22 24 26 14', RED, 1, DASH),
  l8: L('M3 23Q4 14 13 14', RED, 1, DASH) + L('M10 17L20 7', PUR, 1.3) + P('M14 7L21 5L20 12Z', RED) + L('M14 20Q22 18 20 24T27 20', RED, 1, DASH),
  l9: P('M5 7L23 3V21L5 24Z', 'url(#b2)', '#444') + L('M5 13L23 10M14 5V23', '#333', 1) + D(4, 7, 1.6) + D(24, 4, 1.6) + D(4, 24, 1.6) + D(24, 21, 1.6) + D(14, 3, 1.4),
  a1: L('M5 6Q20 9 24 24', PUR, 1.3) + D(5, 6, 2) + D(24, 24, 2),
  a2: L('M4 6Q20 9 23 24', PUR, 1.3) + D(5, 7, 2) + D(23, 22, 2) + L('M2 2L8 12', RED, 1, DASH) + L('M18 21L27 24', RED, 1, DASH),
  a3: L('M3 5H25M3 23H25', RED, 1.1, DASH) + L('M20 2V26', RED, 1.1, DASH) + L('M6 5Q20 4 20 14Q20 23 6 23', PUR, 1.3),
  a4: L('M3 7H25', RED, 1.1, DASH) + L('M20 2V26', RED, 1.1, DASH) + L('M7 19L18 9', PUR, 1.3) + P('M13 9L20 7L18 14Z', RED) + D(7, 19, 1.4),
  c1: C(14, 15, 9.5, 'none', PUR, 1.2) + C(14, 15, .9, PUR) + D(14, 5, 2) + D(21, 8, 1.6) + D(24, 15, 2),
  c2: C(13, 15, 9.5, 'none', PUR, 1.2) + C(13, 15, .9, PUR) + L('M9 1L26 18', RED, 1.1, DASH) + D(12, 5, 1.8) + D(21, 19, 1.8),
  c3: C(14, 14, 9.5, 'none', PUR, 1.2) + C(14, 14, .9, PUR) + L('M3 4H26M3 24H26M23 2V27', RED, 1.1, DASH),
  c4: C(13, 16, 9.5, 'none', PUR, 1.2) + L('M3 5H26M22 2V27', RED, 1.1, DASH) + L('M12 16L20 8', RED, 1.4) + P('M17 8L22 6L20 11Z', RED),
  c5: C(14, 14, 9.5, 'none', PUR, 1.2) + D(14, 14, 1.8) + D(24, 14, 1.8),
  c6: C(14, 14, 9.5, 'none', PUR, 1.2) + L('M11 17L20 8', RED, 1.6) + D(11, 17, 2),
  c7: C(13, 15, 9.5, 'none', PUR, 1.2) + D(13, 15, 1.8) + L('M9 3L25 19', RED, 1.1, DASH),

  // resource bar tabs
  tab1: ycube(4, 5, 5) + ycube(1, 11, 5) + ycube(14, 15, 5) + L('M6 18V27M6 23H14M16 9H28', '#1a1a90', 1.2),
  tab2: L('M14 1V27', '#111', 1, 'stroke-dasharray="2 2"') + P('M5 3L14 8L5 13ZM23 3L14 8L23 13Z', '#0a0a90') + R(2, 16, 10, 10, '#f8f050', '#222') + P('M14 16L26 26H14Z', '#c00818', '#222', .5),
  tab3: P('M2 4A5 2 0 0 1 13 4V13A5 2 0 0 1 2 13Z', '#d8a8e0', '#801888') + L('M14 8H27M7 16V27M7 21H14', '#111', 1.2) + C(20, 21, 5, 'none', '#801888', 1.4) + C(20, 21, 2, '#801888'),
  tab4: R(1, 7, 8, 20, '#f09828', '#a86010') + R(9, 6, 8, 21, '#40c040', '#1a8a30') + R(17, 5, 9, 22, '#3a90d8', '#1a60a8') + P('M1 7L4 3H12L9 7ZM9 6L12 3H20L17 6ZM17 5L20 2H28L26 5Z', '#e6e6e6', '#777', .5),
  tab5: C(11, 19, 8.5, '#2a78d8', '#1a4ea0') + T(9, 25, 'i', 15, '#fff') + L('M14 6Q24 8 25 20M15 1Q28 3 29 16', '#3a70c8', 3),
  tab6: P('M6 2H19L24 7V26H6Z', '#f6f6ff', '#3a50a8', 1.2) + P('M19 2V7H24', '#ccd4f0', '#3a50a8') + C(15, 16, 6, '#3a9a58', '#1a6a80'),
  tab7: C(14, 14, 11, '#f4f4f4', '#444', 1.6) + C(14, 14, 8.5, '#fff', '#8a8a8a') + L('M14 7V14H21', '#111', 2),
  tab8: P('M4 8L12 4V23L4 27Z', '#dcdcdc', '#666') + R(12, 4, 14, 20, '#fff', '#888') + D(15, 8, 2.2, '#2070d0') + D(15, 14, 2.2, '#30a040') + D(15, 20, 2.2, '#d02020') + L('M19 8H25M19 14H25M19 20H25', '#333', 1.2),
  tab9: R(6, 2, 9, 21, 'url(#rb)') + L('M16 10L25 24', '#111', 2.6) + L('M14 5L17 9', '#fff', 2.2),
  tab10: P('M4 22L11 4L16 22Z', '#3a90e0', '#1a60a8') + L('M8 16H15M9 11H15', '#bcd8f4', 1) + L('M14 6H28L22 14', '#3a70c8', 1.4) + L('M14 6L24 19', '#111', 2.6) + L('M3 24H15', '#8ab020', 2, DASH),
  tab11: C(18, 8, 5.5, '#e2a868', '#906030') + P('M9 22Q10 13 18 13Q26 13 27 22Z', '#20a040', '#107030') + C(8, 14, 5, '#b08860', '#5a3a18') + P('M1 27Q2 18 8 18Q15 18 15 27Z', '#7a40c8', '#502090'),
  tab12: P('M4 8L12 4V23L4 27Z', '#dcdcdc', '#666') + R(12, 4, 14, 20, '#fff', '#888') + R(14, 7, 10, 13, '#e88080', '#a02020') + R(17, 7, 4, 13, '#bcd8f8'),

  // right side, column 1
  r1: box(5, 5, 14, 12, 6, 'none', 'none', 'none', '#bbb', 1) + P('M5 10L14 5L23 9V20L14 25L5 20Z', '#e02040') + P('M5 10L14 14L23 9L14 5Z', '#f06080') + P('M14 14L23 9V20L14 25Z', '#901428'),
  r2: P('M14 3L26 14L14 25L2 14Z', '#fff', '#2a2ac0', .8) + P('M14 8L21 14L14 20L7 14Z', '#18d030', '#0a8a20', .6),
  r3: box(4, 6, 14, 13, 6, '#fff', '#fff', '#fff', BLU, 1.4),
  r4: L('M5 5H11M5 5L7 3M5 5L7 7M23 5H17M23 5L21 3M23 5L21 7', '#d02020', 1.3) + box(5, 12, 12, 9, 4, '#f4f0e0', '#f2e6d0', '#d0d8f0', '#8a8aa8', .8) + L('M14 12V25', '#30a040', 1.2),
  r5: P('M3 25V8Q3 2 8 2T13 8V12H15V8Q15 2 20 2T25 8V25Z', '#fff', BLU, 1.4) + P('M3 10Q3 2 8 2T13 10H3ZM15 10Q15 2 20 2T25 10Z', '#d01818') + L('M14 5V27', '#d01818', 1),
  r6: [['#f01818', '#f4e818', '#28c028'], ['#1818e8', '#e8f4f4', '#30c8e8'], ['#101010', '#109030', '#1818a0'], ['#f0a068', '#c0c0f8', '#2820a0']].map((row, y) => row.map((c, x) => R(3 + x * 7.5, 3 + y * 5.5, 7.5, 5.5, c)).join('')).join(''),
  r7: P('M3 8Q5 4 8 6Q14 8 20 6Q24 4 25 8Q24 14 25 20Q24 24 20 22Q14 20 8 22Q5 24 3 20Q4 14 3 8Z', '#fff', BLU, 1.4) + L('M14 2V26M1 14H27', '#e01818', 1, 'stroke-dasharray="3 1"'),
  r8: L('M3 5L25 23', BLU, 1.4),
  r9: C(14, 14, 10, '#f0f0ff', BLU, 1.3) + L('M14 1V27M1 14H27', '#e01818', 1, 'stroke-dasharray="3 1"') + C(14, 14, 3.5, 'none', '#e08080', 1),
  r10: L('M1 4L23 23M5 3L25 20', BLU, 1) + L('M1 7L22 25', '#e01818', 1.4),
  r11: R(3, 5, 22, 18, '#fff', BLU, 1.4) + L('M14 3V25M1 14H27', '#e01818', 1, 'stroke-dasharray="3 1"'),
  r12: `<ellipse cx="14" cy="5" rx="10" ry="2.5" fill="#c8e8c8" stroke="#888" stroke-width=".6"/>` + ['#d8c820', '#e01818', '#20a020', '#1818d8', '#801898', '#101080'].map((c, i) => R(3, 10 + i * 2.8, 22, 2.8, c)).join(''),
  r13: box(4, 6, 15, 14, 6, '#e8e8ff', '#f4d0e0', '#d8d8ff', BLU, 1.3) + L('M6 22L17 12V21L7 13', '#d01818', 1.8),
  r14: L('M9 3V15M9 15L21 8M9 15L18 25', '#e01818', 1.4) + D(9, 3, 1.7) + D(21, 8, 1.7) + D(18, 25, 1.7) + D(9, 15, 1.7),
  r15: P('M2 15L17 2L27 14L12 27Z', '#fff', '#2a2ac0', 1.2) + L('M8 8L20 20M7 9L3 3M14 3L5 12', '#e01818', 1.1) + D(9, 4, 1.5) + D(20, 8, 1.5),
  r16: P('M4 8L22 4L26 8L24 24L7 26L3 22Z', '#c8f4f4', '#28d0d0', 1.2) + L('M9 4V15L22 9M9 15L18 24', '#e01818', 1.3) + D(9, 15, 1.6),
  r17: L('M5 5L23 23M23 5L5 23', '#e01020', 4.6),
  r18: P('M2 10H8L10 12H15V24H2Z', '#d8a820', '#806010') + P('M2 24L5 15H17L15 24Z', '#f8d848') + `<text x="16" y="19" font-size="12" fill="#666" font-family="Noto Sans CJK SC, sans-serif">组</text>`,
  r19: R(12.5, 2, 3, 10, '#3a50a0') + P('M10 12H18L23 25H5Z', '#d8a848', '#806020') + L('M10 15L8 25M14 15V25M18 15L20 25', '#806020', 1),
  r20: box(3, 11, 14, 11, 5, '#fff', '#fff', '#fff', BLU, 1.4) + T(12, 10, '10', 10, '#333', 'normal') + L('M8 13L24 5', '#d01818', 1),
  r21: P('M3 6L9 3L14 6V13L8 16L3 13Z', '#f8e050', '#c8a820', .6) + P('M13 15L20 12L26 15V22L19 26L13 22Z', '#c8d4f8', '#98a4d8', .6),
  r22: box(5, 7, 14, 15, 6, 'none', '#f4c8c8', 'none', '#d01818', 1.2),

  // column 2
  q1: L('M5 17L18 5', '#e01818', 2) + L('M10 24L23 11', '#111', 2),
  q2: L('M6 22L22 6', '#e01818', 2) + D(6, 22, 2.2, '#2020c0') + D(22, 6, 2.2, '#2020c0'),
  q3: L('M16 4Q25 10 22 19Q15 27 6 18', '#e01818', 1.8) + P('M12 6L18 1V9Z', '#e01818') + C(14, 14, 1, '#2020c0'),
  q4: L('M8 6V20M8 20L24 14M8 20L17 27', '#7a18c0', 1.6) + D(8, 6, 1.6, '#7a18c0') + D(22, 14, 1.6, '#7a18c0') + lock(15, 2),
  q5: [[4, 3], [17, 3], [4, 17], [17, 17]].map(p => lock(p[0], p[1]).replace(/stroke-width="1"/g, 'stroke-width="1.2"')).join('') + L('M14 1V27M1 14H27', '#e01818', 1),
  q6: [[3, 3], [16, 3], [3, 16], [16, 16]].map(p => R(p[0], p[1], 9, 9, '#703018', BLU, 1.2)).join('') + L('M14 1V27M1 14H27', '#b04040', 1),
  q7: L('M7 14V3', '#333', 1.3) + P('M5 6L7 2L9 6Z', '#222') + R(10, 13, 14, 9, 'none', '#e01818', 1.3),
  q8: L('M3 19L17 6', '#e01818', 2) + L('M8 25L21 12', '#111', 2) + R(15, 2, 11, 9, '#fff', BLU, 1.2),
  q9: L('M4 24L20 8', '#e01818', 2.2) + D(4, 24, 2.4, '#2020c0') + R(10, 2, 11, 8, '#fff', BLU, 1.2) + P('M19 9L23 13H17Z', '#e01818'),
  q10: L('M16 4Q25 10 22 19Q15 27 6 18', '#e01818', 1.8) + P('M11 18L5 22L5 14Z', '#e01818') + R(9, 8, 9, 9, '#fff', BLU, 1.2) + C(13.5, 12.5, 1, '#111'),
  q11: L('M8 6V19M8 19L24 15M8 19L17 27', '#e01818', 1.6) + lock(15, 2) + R(15, 15, 10, 9, '#fff', BLU, 1.2),
  q12: [[14, 4], [6, 7], [22, 7], [4, 14], [24, 14], [7, 21], [21, 21], [14, 24]].map(p => C(p[0], p[1], 1.9, '#fff', BLU, 1.1)).join('') + L('M14 9V19M9 14H19', '#e01818', 1),
  q13: [[3, 3], [16, 3], [3, 16], [16, 16]].map(p => R(p[0], p[1], 9, 9, '#20d838', BLU, 1.2)).join('') + L('M14 1V27M1 14H27', '#e01818', 1),
  q14: L('M7 15V4', '#222', 1.5) + P('M5 7L7 2L9 7Z', '#222') + R(10, 13, 14, 10, '#fff', BLU, 1.3),
  q15: L('M17 4Q25 10 22 19Q15 27 6 18', '#e01818', 1.8) + R(3, 4, 9, 8, '#fff', BLU, 1.2) + C(14, 15, 1, '#222'),
  q16: R(3, 6, 12, 7, '#fff', BLU, 1) + L('M5 9L23 22', '#30c040', 1, DASH) + L('M7 9H11', '#888', 1) + D(23, 23, 1.6),

  // column 3, mould parts
  m1: L('M7 4V19Q7 24 12 24Q13 22 13 15', '#4a70d8', 2.4) + P('M4 8L7 2L10 8Z', '#4a70d8') + R(16, 4, 9, 18, '#f2e070', '#a08820') + R(19, 8, 3, 3, '#555'),
  m2: `<ellipse cx="14" cy="14" rx="12.5" ry="9.5" fill="#fff" stroke="${BLU}" stroke-width="1.5"/>` + C(14, 14, 5, 'none', '#d88', 1.4) + `<ellipse cx="14" cy="14" rx="7" ry="5" fill="#e0e0ff" stroke="#a0a0d0"/>` + L('M14 1V27M0 14H28', '#e01818', 1),
  m3: M('M3 3H25V12H19V25H9V12H3Z', L('M11 13V25M17 13V25M10 3V10M18 3V10', BLU, .8)),
  m4: P('M6 3H25V9L18 26H10L15 11H6Z', '#fff', BLU, 1.4),
  m5: R(2, 18, 24, 7, '#8a10a8') + P('M6 2H25V9L18 26H10L15 11H6Z', '#fff', BLU, 1.4) + L('M0 21H28', '#e01818', 1, 'stroke-dasharray="2 1"'),
  m6: M('M9 4H19V24H9Z', L('M7 8H21M7 12H21M7 16H21M7 20H21', BLU, 1) + `<ellipse cx="14" cy="16" rx="11" ry="3" fill="none" stroke="#20a080" stroke-width="1.2"/>`),
  m7: M('M7 2H21V5L18 11V16L21 22V26H7V22L10 16V11L7 5Z', R(11, 8, 6, 12, '#e0e0ff', BLU, 1)),
  m8: M('M8 2H20V19H17V26H11V19H8Z', L('M8 7H20', BLU, 1)),
  m9: M('M7 2H21V20L18 26H10L7 20Z', P('M10 24L13 14H15L18 24Z', '#e0e0ff', BLU, 1)),
  m10: M('M6 2H22V8H19V22L16 26H12L9 22V8H6Z', R(11, 6, 6, 14, '#fde0e8')),
  m11: P('M11 3H17V15H24Q26 18 24 22H4Q2 18 4 15H11Z', '#f4f4ff', BLU, 1.4) + L('M14 5V26', '#e01818', 1.2, 'stroke-dasharray="2 1"'),
  m12: M('M10 2H18L22 8L18 14L23 22L18 26H10L5 22L10 14L6 8Z', R(11, 16, 6, 9, '#c03080')),
  m13: box(4, 3, 14, 16, 5, '#fff', '#fff', 'none', BLU, 1.2) + R(10, 3, 8, 15, '#fff', BLU) + P('M7 18H21L22 24H6Z', '#f4f4ff', BLU, 1) + L('M14 1V26M7 12L19 7', '#e01818', 1.1),
  m14: R(3, 4, 22, 4, '#fff', BLU, 1.4) + R(4, 9, 20, 4, '#fff', BLU, 1.2) + R(3, 14, 22, 4, '#fff', BLU, 1.4) + L('M6 18V24M22 18V24', BLU, 2) + C(6, 24, 2, '#fff', BLU) + C(22, 24, 2, '#fff', BLU),
  m15: [[2, 2], [16, 2], [2, 16], [16, 16]].map(p => R(p[0], p[1], 10, 10, '#fff', BLU, 1.2) + C(p[0] + 5, p[1] + 5, 2.5, '#e07a9a')).join('') + R(8, 2, 12, 24, '#f4e8f4') + L('M1 14H27', '#701850', 3) + L('M14 1V27', '#e01818', 1) + L('M9 2V26M19 2V26', BLU, 1),
  m16: R(7, 6, 14, 18, '#8a3878', BLU, 1.4) + R(5, 9, 4, 12, '#b080c0', BLU, .8) + R(19, 9, 4, 12, '#b080c0', BLU, .8) + R(10, 2, 8, 4, '#a05090', BLU) + L('M14 0V28', '#e01818', 1),
  m17: R(8, 2, 12, 24, '#fff', BLU, 1.4).replace('/>', ' rx="6"/>') + R(11, 5, 6, 18, '#e8d8f8', BLU, .8).replace('/>', ' rx="3"/>') + L('M14 1V27', '#e01818', 1),
  m18: M('M16 2H22V23Q19 27 16 24Z', L('M2 10L14 20', BLU, 3.4) + L('M3 11L13 19', '#e08090', 1.6)),
  m19: P('M4 3H25L21 26H9Z', '#fff', BLU, 1.4) + L('M12 3V25M18 3V25', BLU, 1) + L('M14 3V26', '#e01818', 1.2),
  m20: [3, 6, 9, 12, 15, 18, 21, 24].map(y => L(`M5 ${y}L23 ${y + 2}`, y % 2 ? BLU : '#5020a0', 1.2)).join('') + L('M14 1V27', '#e01818', 1),
  m21: M('M8 2H20V9H17V14H23V18L18 22V26H10V22L5 18V14H11V9H8Z', L('M6 17H22M10 21H18M8 6H20', BLU, 1)),
  m22: `<ellipse cx="14" cy="12" rx="11" ry="9" fill="#fff" stroke="${BLU}" stroke-width="1.3"/>` + C(14, 12, 5, '#e8a0a0', '#c06060') + L('M11 21V26H17V21', BLU, 1.4) + L('M14 1V27M1 12H27', '#e01818', 1),
  m23: R(7, 2, 14, 24, '#fff', BLU, 1.3) + C(14, 9, 4, '#d8d8e8', '#4040a0') + C(14, 19, 4, '#d8d8e8', '#4040a0'),

  // bottom bar
  newsk: R(3, 4, 15, 22, '#f6f6f6', '#222', 1) + L('M6 8H14V14H6ZM8 17H16V23H8Z', '#222', 1) + P('M21 1L23 6L28 7L24 10L25 15L21 12L17 15L18 10L14 7L19 6Z', '#f6e83c'),
  flag: R(1, 1, 26, 26, '#8fa3ad') + [[6, 6], [10, 10], [14, 6], [18, 10], [6, 14], [14, 14], [10, 18], [18, 18]].map(p => R(p[0], p[1], 4, 4, '#6a6a7a')).join(''),
  bprof: L('M3 8Q4 24 10 22Q14 19 13 10Q12 4 15 5Q19 8 17 18Q19 24 24 20', '#222', 1.4) + D(6, 17, 2.2) + D(14, 16, 2.2) + D(22, 17, 2.2),
  bcirc: C(14, 14, 10.5, 'none', '#111', 1.4),
  gfil: L('M3 5H14Q23 6 23 14V27', '#a59a9a', 1.5),
  gfil2: L('M3 4H22L25 8V27', '#a59a9a', 1.5),
  bplus: L('M4 14H25M14 4V25', '#111', 1.4),
  gheart: P('M5 8Q10 2 15 7L20 11Q26 15 23 22Q18 27 12 25L6 18Z', '#e0e0e0', '#888', 1.2) + P('M8 9Q12 5 15 9L18 13Q22 16 20 21Q16 24 13 22L9 17Z', '#fff', '#a89090', 1),
  gtrim: L('M3 5H25M3 25H25', '#888', 1.3) + L('M9 5L23 26', '#777', 1.3) + L('M5 25L18 5', '#b0a0a0', 1),
  gera: L('M5 24L20 4', '#aaa', 1.3) + P('M16 11L23 6L26 11L19 16Z', '#999') + L('M2 15L26 17', '#999', 1.2),
  gera2: L('M5 24L22 4', '#aaa', 1.3) + P('M14 14L24 4L27 7L17 17Z', '#9aaa90') + L('M2 15H18', '#aaa', 1.2),
  gcr: L('M4 14H26', '#aaa', 1.4) + L('M18 4L10 26', '#b0a0a0', 1.3) + L('M16 14V26', '#aaa', 1.2),
  gdim: L('M3 9V21M3 15H25M25 9V21', '#888', 1.2) + P('M9 15L19 4L16 13L22 12L12 24L15 16Z', '#9a9a9a') ,
  gperp: L('M5 8L12 3M3 11L10 5', '#999', 1.2) + L('M16 6V22M6 22H26', '#aaa', 1.3),
  gpar: R(6, 5, 17, 19, 'none', '#999', 1.2) + L('M10 1V11M18 1V11M14 1V26', '#a09090', 1.2) + P('M8 7L11 5V9ZM20 7L17 5V9Z', '#666'),
  gtan: P('M1 7L7 12L1 17Z', '#78a850') + L('M12 14L21 4M15 15L24 6', '#aaa', 1.2) + L('M18 14V24M10 24H26', '#aaa', 1.3),
  gsq: R(3, 2, 11, 11, 'none', '#777', 1.2) + R(14, 13, 11, 12, 'none', '#777', 1.2) + R(3, 13, 11, 12, '#bbb', '#777') + P('M16 13L24 3L27 6L19 14Z', '#a8987a') + R(7, 18, 4, 5, '#777'),
  gman: P('M8 10L18 8L26 11V24L16 27L8 25Z', '#888') + P('M4 3Q12 1 12 8L9 9Q8 5 5 6Z', '#999') + L('M18 4Q26 2 24 10', '#999', 2) + C(14, 17, 4, '#666'),
  gman2: P('M3 13L15 10L25 15V22L14 26L3 22Z', '#8a8a8a') + L('M8 6Q8 1 14 2', '#8a8a8a', 2.4) + C(11, 9, 3.6, '#aaa') + R(14, 15, 8, 6, '#9ab0b8'),
};

const DEFS = `<defs>
<linearGradient id="b" x1="0" y1="0" x2="1" y2="1"><stop offset="0" stop-color="#f4f6ff"/><stop offset="1" stop-color="#6d84e4"/></linearGradient>
<linearGradient id="b2" x1="0" y1="0" x2="1" y2="0"><stop offset="0" stop-color="#8aa8c8"/><stop offset=".5" stop-color="#2a68a8"/><stop offset="1" stop-color="#b0c0d0"/></linearGradient>
<linearGradient id="o" x1="0" y1="0" x2="0" y2="1"><stop offset="0" stop-color="#fcd070"/><stop offset="1" stop-color="#e07a18"/></linearGradient>
<linearGradient id="rb" x1="0" y1="0" x2="0" y2="1"><stop offset="0" stop-color="#e03020"/><stop offset=".22" stop-color="#f8e020"/><stop offset=".45" stop-color="#30d040"/><stop offset=".7" stop-color="#20d0f0"/><stop offset="1" stop-color="#1020d0"/></linearGradient>
<radialGradient id="y" cx=".42" cy=".38" r=".65"><stop offset="0" stop-color="#ffffb0"/><stop offset=".5" stop-color="#eee040"/><stop offset="1" stop-color="#a8a020"/></radialGradient>
<radialGradient id="glb" cx=".4" cy=".3" r=".8"><stop offset="0" stop-color="#7ab8f4"/><stop offset="1" stop-color="#1e50b0"/></radialGradient>
</defs>`;

// every element below is one class with an open shadow root
function def(tag, css, html = '<slot></slot>') {
  customElements.define(tag, class extends HTMLElement {
    connectedCallback() {
      if (this.shadowRoot) return;
      const markup = typeof html === 'function' ? html(this) : html;
      this.attachShadow({ mode: 'open' }).innerHTML = `<style>${typeof css === 'function' ? css(this) : css}</style>${markup}`;
    }
  });
}
const svg = (n, s) => `<svg xmlns="http://www.w3.org/2000/svg" viewBox="0 0 28 28" width="${s}" height="${s}">${(ICONS[n] || '').includes('url(#') ? DEFS : ''}${ICONS[n] || ''}</svg>`;

def('nx-app', `:host{display:flex;width:1560px;height:1008px;padding:9px 10px 0 3px;box-sizing:border-box;background:#000}
  .win{width:1542px;display:flex;flex-direction:column;flex:none}
  .strip{width:5px;height:990px;margin-top:1px;background:#f2f2f2;flex:none}`,
  `<div class="win"><slot></slot><div style="height:8px;background:linear-gradient(#4a4a4a 0,#2a2a2a 20%,#1c1c1c);margin-top:1px"></div></div><div class="strip"></div>`);

def('nx-title', `:host{display:block;height:29px;background:linear-gradient(#424242 0,#a0a0a0 24%,#7e7e7e 31%,#1a1a1a 32%,#0e0e0e 100%);border-radius:3px 3px 0 0;position:relative;font:12.6px "Liberation Sans","Noto Sans CJK SC",sans-serif;color:#dedede}
  .row{display:flex;align-items:center;height:20px;padding-top:4px;padding-left:5px}
  .logo{width:19px;height:18px;margin-right:2px;flex:none}
  .siemens{margin-left:auto;margin-right:28px;font:bold 12px "Liberation Sans",sans-serif;color:#f4f4f4;letter-spacing:.9px}
  .btn{width:19px;height:19px;box-sizing:border-box;border:1px solid #666;border-radius:3px;margin-right:4px;background:linear-gradient(#5a5a5a,#2a2a2a);display:flex;align-items:center;justify-content:center;flex:none}
  .close{background:linear-gradient(#e07050,#b02820);border-color:#a04030}
  .name{white-space:pre}`,
  el => `<div class="row"><svg class="logo" viewBox="0 0 28 28"><path d="M3 4L14 16L25 6L18 24Q8 26 3 4Z" fill="#3038b8"/><path d="M2 21Q14 28 26 6L24 20Q14 30 2 21Z" fill="#e8b030"/></svg>
  <span class="name">${el.getAttribute('text')}</span><span class="siemens">SIEMENS</span>
  <span class="btn"><svg width="11" height="11"><rect x="1" y="8" width="6" height="2" fill="#eee"/></svg></span>
  <span class="btn" style="width:20px"><svg width="13" height="11"><rect x="1" y="1" width="11" height="9" fill="none" stroke="#eee" stroke-width="1.6"/></svg></span>
  <span class="btn close" style="margin-right:3px"><svg width="13" height="13"><path d="M2 2L11 11M11 2L2 11" stroke="#fff" stroke-width="2.4"/></svg></span></div>`);

def('nx-client', `:host{display:flex;flex-direction:column;flex:none;margin:0 3px;border:0;height:959px;background:#ddd}`);

def('nx-menubar', `:host{display:flex;align-items:center;height:25px;background:linear-gradient(#e6e6e6,#dfdfdf);font:12px "Noto Sans CJK SC",sans-serif;color:#222;box-sizing:border-box;padding-left:7px;border-bottom:1px solid #cfcfcf;position:relative}
  .mdi{position:absolute;right:5px;top:5px;display:flex;gap:3px}
  .mdi span{width:16px;height:15px;border:1px solid #888;border-radius:3px;background:#e8e8e8;display:flex;align-items:center;justify-content:center;box-sizing:border-box}`,
  `<slot></slot><div class="mdi"><span><svg width="10" height="10"><rect x="2" y="7" width="6" height="2" fill="#444"/></svg></span><span style="width:17px"><svg width="11" height="11"><path d="M3 3V1H10V7H8M1 3H8V10H1Z" fill="none" stroke="#555"/></svg></span><span style="width:17px"><svg width="10" height="10"><path d="M1 1L9 9M9 1L1 9" stroke="#333" stroke-width="2"/></svg></span></div>`);

def('nx-menu', `:host{display:inline-flex;align-items:center;margin-right:13px;white-space:pre;line-height:1;flex:none}
  .k{font:10px "Liberation Mono",monospace}
  u{text-decoration:underline}
  .m{font:10px "Liberation Mono",monospace;letter-spacing:0}`,
  el => {
    const k = el.getAttribute('k'), label = el.getAttribute('label');
    if (el.hasAttribute('mono')) return `<span class="m">${label}</span>`;
    if (k) return `${label}<span class="k">(<u>${k}</u>)</span>`;
    return label.replace('GC ', '<span class="m">GC </span>');
  });

def('nx-row', `:host{display:flex;height:34px;background:linear-gradient(#dcdcdc,#d6d6d6);flex:none;border-top:1px solid #efefef;box-sizing:border-box}`);

def('nx-bar', `:host{display:flex;align-items:center;height:33px;background:linear-gradient(#e2e2e2,#dadada);box-sizing:border-box;border-right:1px solid #f1f1f1;border-bottom:1px solid #c9c9c9;flex:none;padding-left:0}
  :host([flat]){background:none;border:0}
  .grip{width:5.5px;height:25px;flex:none;background:radial-gradient(circle,#8e8e8e 0 1px,transparent 1.4px) 1px 0/3px 4px repeat-y}`,
  `<span class="grip"></span><slot></slot>`);

def('nx-i', el => {
  const w = el.getAttribute('w') || 31.2;
  return `:host{display:flex;align-items:center;justify-content:center;flex:none;width:${w}px;height:100%;box-sizing:border-box}
  :host([v]){width:100%;height:31px}
  .t{width:24px;height:24px;display:flex;align-items:center;justify-content:center;background:#c8c8c8}
  .b{width:23px;height:24px;display:flex;align-items:center;justify-content:center;background:#f4f4f4;border:1px solid #777;border-radius:3px;box-sizing:border-box;flex:none}
  :host([v]) .b{width:29px;height:30px}
  svg{flex:none;overflow:visible}`;
}, el => {
  const n = el.getAttribute('n');
  const s = el.getAttribute('s') || (el.hasAttribute('tile') ? 23 : el.hasAttribute('box') ? (el.hasAttribute('v') ? 26 : 19) : 26);
  const g = svg(n, s);
  if (el.hasAttribute('tile')) return `<div class="t">${g}</div>`;
  if (el.hasAttribute('box')) return `<div class="b">${g}</div>`;
  return g;
});

def('nx-a', el => `:host{display:flex;justify-content:center;align-items:center;flex:none;width:${el.getAttribute('w') || 11}px;height:100%}
  :host([low]){align-items:flex-end;padding-bottom:5px;box-sizing:border-box;width:${el.getAttribute('w') || 11}px}
  i{display:block;width:0;height:0;border:3px solid transparent;border-top:4px solid #111;border-bottom:0}`, '<i></i>');

def('nx-s', el => `:host{display:flex;justify-content:center;align-items:center;flex:none;width:${el.getAttribute('w') || 6}px;height:100%}
  :host([v]){width:100%;height:5.5px}
  i{display:block;width:1px;height:${el.getAttribute('h') || 30}px;background:#f6f6f6;border-left:1px solid #c2c2c2}
  :host([v]) i{width:30px;height:1px;background:#f6f6f6;border-left:0;border-top:1px solid #c8c8c8}`, '<i></i>');

def('nx-label', el => `:host{display:inline-flex;align-items:center;flex:none;width:${el.getAttribute('w')}px;font:12px "Liberation Sans","Noto Sans CJK SC",sans-serif;color:${el.hasAttribute('muted') ? '#8a8a8a' : '#222'};white-space:nowrap;line-height:1;height:100%}`);

def('nx-selbar', `:host{display:flex;align-items:center;height:27px;background:linear-gradient(#dedede,#d8d8d8);flex:none;box-sizing:border-box;border-top:1px solid #f2f2f2;border-bottom:1px solid #c6c6c6}`);

def('nx-combo', `:host{display:flex;align-items:center;height:16px;background:#fafafa;border:1px solid #6a7a94;border-radius:3px;box-sizing:border-box;flex:none;font:12px/14px "Noto Sans CJK SC",sans-serif;color:#111;padding-left:1px}
  span{flex:1;white-space:nowrap}
  b{width:15px;height:14px;flex:none;background:linear-gradient(#b4d2f6,#6c9ade);display:flex;align-items:center;justify-content:center;border-left:1px solid #6a7a94}
  i{width:0;height:0;border:5px solid transparent;border-top:5px solid #102040;border-bottom:0}`,
  el => `<span>${el.getAttribute('label')}</span><b><i></i></b>`);

def('nx-cue', `:host{display:flex;align-items:center;height:22px;background:linear-gradient(#e2e2e2,#d8d8d8);flex:none;box-sizing:border-box;padding-left:3px;font:bold 13px "Noto Sans CJK SC",sans-serif;color:#0c0c0c;line-height:1;border-bottom:1px solid #bdbdbd}
  .t{width:716px;white-space:pre}
  .m{font:bold 12px "Liberation Mono",monospace}
  .c{display:block;width:1px;height:100%;background:#f6f6f6}
  .r{margin-left:auto;display:flex;gap:4px;align-items:center;margin-right:2px}
  .ic{width:15px;height:15px;background:#8ea4ac;border:1px solid #8a9aa0;display:block}`,
  el => `<span class="t">${el.getAttribute('text')} <span class="m">MB3</span>，或者双击某一对象</span><span class="c"></span><span class="c" style="margin-left:718px"></span><span class="c" style="margin-left:19px"></span>
  <div class="r"><span class="ic"></span><svg width="16" height="16" viewBox="0 0 16 16"><path d="M1 4V1H4M12 1H15V4M15 12V15H12M4 15H1V12" fill="none" stroke="#333" stroke-width="1.4"/><rect x="3" y="3" width="10" height="10" fill="#2f66c8" stroke="#223"/><rect x="3" y="3" width="10" height="3" fill="#dde"/></svg></div>`);

def('nx-main', `:host{display:flex;height:750px;flex:none;background:#e0e0e0}`);

def('nx-res', `:host{display:flex;flex-direction:column;flex:none;width:32px;padding:18px 0 0 6px;box-sizing:border-box;gap:2px;background:linear-gradient(90deg,#b8b8b8,#acacac 75%,#7e7e7e);height:750px}`);

def('nx-tab', `:host{display:flex;align-items:center;justify-content:center;flex:none;width:26px;height:40px;box-sizing:border-box;background:linear-gradient(90deg,#e0e0e0,#d8d8d8);border:1px solid #7a7a7a;border-right:0;border-radius:4px 0 0 4px;overflow:hidden}
  svg{flex:none}`, el => svg(el.getAttribute('n'), 24));

def('nx-stripe', `:host{display:block;width:10px;flex:none;height:750px;background:#f1f1f1}`);

def('nx-vbar', el => `:host{display:flex;flex-direction:column;align-items:center;flex:none;width:34px;box-sizing:border-box;height:750px;background:linear-gradient(#cfcfcf,#cfcfcf);border-right:1px solid #f0f0f0}
  .in{display:flex;flex-direction:column;width:100%;height:var(--h);background:#dedede;box-sizing:border-box;flex:none;border-bottom:1px solid #f0f0f0;padding-top:calc(var(--top))}
  .g{height:7px;width:100%;flex:none;background:radial-gradient(circle,#888 0 .9px,transparent 1.2px) center 3px/4px 4px repeat-x}`,
  `<div class="in"><div class="g"></div><slot></slot></div>`);

def('nx-tri', el => `:host{display:flex;align-items:center;justify-content:${el.hasAttribute('more') ? 'space-between' : 'flex-start'};height:14px;padding:2px ${el.hasAttribute('more') ? '6px' : '5px'} 0;box-sizing:border-box;flex:none;width:100%}
  :host([more]){margin-top:auto;margin-bottom:2px}
  i{display:block;width:0;height:0;border:3px solid transparent;border-right:4px solid #111;border-left:0}`,
  el => `<i></i>${el.hasAttribute('more') ? '<svg width="8" height="9"><path d="M1 1L4 3L7 1M1 5L4 7L7 5" fill="none" stroke="#222" stroke-width="1.5"/></svg>' : ''}`);

def('nx-viewport', `:host{display:block;position:relative;flex:1;min-width:0;height:750px;background:linear-gradient(#b1b4b6 0,#c7cacc 30%,#d8dadc 55%,#e3e5e6 80%,#e6e8e9 100%);overflow:hidden}
  svg{position:absolute;left:0;top:0}`,
  `<svg width="1358" height="750" viewBox="82 214 1358 750" xmlns="http://www.w3.org/2000/svg">
    <defs>
      <linearGradient id="rod" x1="0" y1="0" x2="1" y2="0"><stop offset="0" stop-color="#e88a08"/><stop offset=".55" stop-color="#f9a410"/><stop offset="1" stop-color="#e98d08"/></linearGradient>
      <radialGradient id="sph" gradientUnits="userSpaceOnUse" cx="0" cy="0" r="230" gradientTransform="translate(785 395) scale(1.35 1)"><stop offset="0" stop-color="#f8cf12"/><stop offset=".2" stop-color="#f8cf12"/><stop offset=".38" stop-color="#f4b212"/><stop offset=".55" stop-color="#e6910c"/><stop offset=".68" stop-color="#b06a06"/><stop offset=".82" stop-color="#6a4000"/><stop offset="1" stop-color="#643c00"/></radialGradient>
      <radialGradient id="hi" gradientUnits="userSpaceOnUse" cx="820" cy="452" r="75"><stop offset="0" stop-color="#fbfb33"/><stop offset=".5" stop-color="#f9e224" stop-opacity=".65"/><stop offset="1" stop-color="#f8d010" stop-opacity="0"/></radialGradient>
      <radialGradient id="hi2" gradientUnits="userSpaceOnUse" cx="745" cy="458" r="52"><stop offset="0" stop-color="#f9e030" stop-opacity=".55"/><stop offset="1" stop-color="#f8d010" stop-opacity="0"/></radialGradient>
      <radialGradient id="rim" gradientUnits="userSpaceOnUse" cx="783" cy="520" r="146"><stop offset=".72" stop-color="#d07808" stop-opacity="0"/><stop offset="1" stop-color="#d47c08" stop-opacity=".85"/></radialGradient>
      <linearGradient id="con" gradientUnits="userSpaceOnUse" x1="452" y1="0" x2="597" y2="0"><stop offset="0" stop-color="#f29a0e"/><stop offset=".3" stop-color="#f9b810"/><stop offset=".6" stop-color="#fed70e"/><stop offset="1" stop-color="#f6ae0a"/></linearGradient>
    </defs>
    <path d="M585 477L665 475L662 486Z" fill="#f6a60c" stroke="#7a5a20" stroke-width=".5"/>
    <path d="M905 495L923 497L905 497Z" fill="#f0a00c"/>
    <path d="M585 477L771 500L767 740L571 719Z" fill="#d58506"/>
    <path d="M771 497L923 497L906 739L767 740Z" fill="#de8b08"/>
    <path d="M585 477L571 690M923 497L906 739L767 740L597 722M774 610L767 740" fill="none" stroke="#3a2a10" stroke-width="1"/>
    <path d="M598 236L610 236L593 476L581 476Z" fill="url(#rod)" stroke="#7a5a20" stroke-width=".4"/>
    <circle cx="783.5" cy="499" r="121" fill="url(#sph)"/>
    <circle cx="783.5" cy="499" r="121" fill="url(#rim)"/>
    <circle cx="783.5" cy="499" r="121" fill="url(#hi)"/>
    <circle cx="783.5" cy="499" r="121" fill="url(#hi2)"/>
    <path d="M528 644L452 712Q520 725 597 721Z" fill="url(#con)"/>
    <path d="M452 712Q520 725 597 721" fill="none" stroke="#6a5a2a" stroke-width=".9"/>
    <circle cx="462" cy="571" r="29" fill="#d3e02f"/>
    <circle cx="462.5" cy="571.5" r="11" fill="none" stroke="#fff" stroke-width="1.4"/>
    <circle cx="462.5" cy="571.5" r="11" fill="none" stroke="#111" stroke-width="1" stroke-dasharray="8 9.3"/>
    <path d="M462.5 557V586M448 571.5H477" stroke="#111" stroke-width="3.4"/>
    <path d="M462.5 558V585M449 571.5H476" stroke="#fff" stroke-width="1.6"/>
    <g>
      <path d="M146 880L174 876L178 878V901L151 905L146 902Z" fill="#d4d6d7" stroke="#a8aaac"/>
      <path d="M146 880V902M160 878V903M174 876V901" stroke="#a8aaac" fill="none"/>
      <path d="M143 902L176 905" stroke="#b02a38" stroke-width="2.4"/>
      <path d="M172 901L178 905L172 908Z" fill="#c02838"/>
      <path d="M143 902L145 866" stroke="#1a3ae0" stroke-width="3"/>
      <path d="M141 870L145 859L149 870Z" fill="#1a3ae0"/>
      <circle cx="142" cy="902" r="4" fill="#b8bcc0"/>
      <text x="141" y="860" font-size="10" fill="#2a44c8" font-family="Liberation Sans,sans-serif">Z</text>
      <text x="176" y="910" font-size="10" fill="#c02838" font-family="Liberation Sans,sans-serif">X</text>
    </g>
  </svg><slot></slot>`);

def('nx-watermark', `:host{position:absolute;left:171px;top:622px;display:block;white-space:nowrap;font:44.5px/52px "Noto Sans CJK SC",sans-serif;color:#222;width:1060px;height:56px;font-weight:300}
  .l{display:inline-block;font:53px/52px "Liberation Serif",serif;transform-origin:0 50%;vertical-align:top}
  .s{display:inline-block;transform:scaleY(1.08);transform-origin:0 50%}`,
  `<span class="s">更多免费</span><span class="l" style="width:44px;transform:scaleX(.575)">UG</span><span class="s">模具设计学习资料可以加我</span><span class="l" style="width:291px;transform:scaleX(.874)">qq:2985863485</span>`);

def('nx-status', `:host{display:flex;align-items:center;height:33px;flex:none;background:linear-gradient(#ececec,#e2e2e2 50%,#cfcfcf)}`);
</script>
</body>
</html>
